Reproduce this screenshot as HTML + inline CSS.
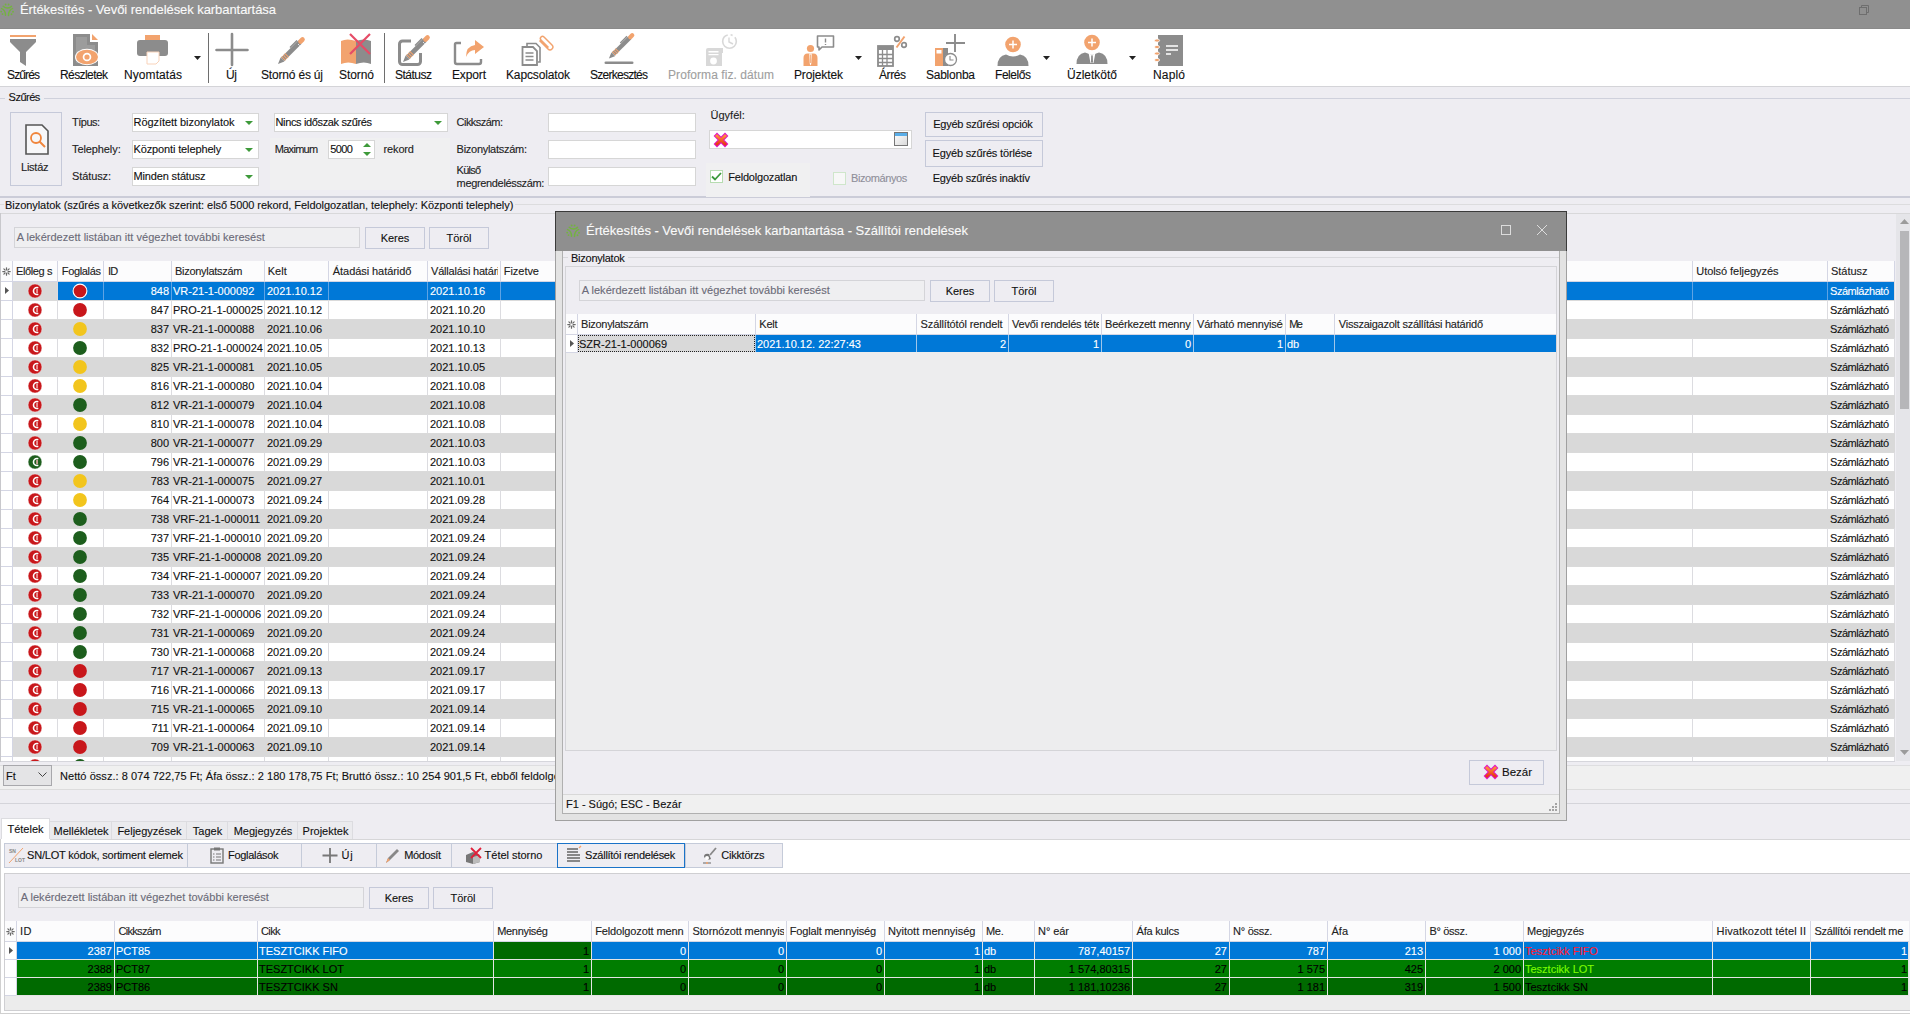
<!DOCTYPE html>
<html><head><meta charset="utf-8"><title>Értékesítés - Vevői rendelések karbantartása</title>
<style>
html,body{margin:0;padding:0;}
body{width:1910px;height:1014px;overflow:hidden;position:relative;background:#eeedf2;font-family:"Liberation Sans", sans-serif;font-size:11px;color:#000;-webkit-text-stroke:0.12px currentColor;}
svg{position:absolute;overflow:visible}
</style></head><body>
<div style="position:absolute;left:0px;top:0px;width:1910px;height:28px;background:#909090"></div><div style="position:absolute;left:0px;top:28px;width:1910px;height:1px;background:#8a8a8a"></div><svg style="left:0px;top:0px" width="15" height="17" viewBox="0 0 15 17"><g fill="none" stroke="#74b340" stroke-width="1.5" stroke-linecap="round"><path d="M3.2 6.3 Q7.2 9.8 11.5 6.3"/><path d="M1.6 8.6 Q5.5 10 5.5 15.3"/><path d="M12.5 8.6 Q8.5 10 8.5 15.5"/></g><g fill="#74b340"><circle cx="5.6" cy="4.5" r="0.95"/><circle cx="8.6" cy="4.5" r="0.95"/><circle cx="1.2" cy="11.6" r="0.95"/><circle cx="2.5" cy="14.1" r="0.95"/><circle cx="13" cy="11.8" r="0.95"/><circle cx="11.5" cy="14.3" r="0.95"/></g></svg><div style="position:absolute;top:1.80px;line-height:15px;font-size:13px;color:#fafafa;white-space:nowrap;left:20px;letter-spacing:-0.063px;">Értékesítés - Vevői rendelések karbantartása</div><svg style="left:1859px;top:5px" width="10" height="10" viewBox="0 0 10 10"><g fill="none" stroke="#6e6e6e" stroke-width="1"><rect x="0.5" y="2.5" width="7" height="7"/><path d="M2.5 2.5 V0.5 H9.5 V7.5 H7.5"/></g></svg><div style="position:absolute;left:0px;top:29px;width:1910px;height:57px;background:#fff"></div><div style="position:absolute;left:0px;top:86px;width:1910px;height:1px;background:#d4d4d8"></div><svg style="left:7px;top:34px" width="32" height="32" viewBox="0 0 32 32"><rect x="3" y="1" width="26" height="2" fill="#f2a36e"/><path d="M3 5 H29 V8 L19 18 V32 L13 28 V18 L3 8 Z" fill="#8c8c8c"/></svg><div style="position:absolute;top:67.84px;line-height:14px;font-size:12px;color:#111;white-space:nowrap;left:7px;letter-spacing:-0.872px;">Szűrés</div><svg style="left:70px;top:34px" width="32" height="32" viewBox="0 0 32 32"><path d="M3 0 H20 V8 H28 V32 H3 Z" fill="#8c8c8c"/><path d="M6 3 H17 V11 H25 V29 H6Z" fill="#9c9c9c"/><path d="M22 0 L28 6 H22 Z" fill="#f2a36e"/><ellipse cx="17" cy="23" rx="12" ry="8.3" fill="#fff"/><ellipse cx="17" cy="23" rx="11" ry="7.3" fill="#f2a36e"/><circle cx="17" cy="23" r="4.3" fill="#fff"/><circle cx="17" cy="23" r="2.6" fill="#f2a36e"/></svg><div style="position:absolute;top:67.84px;line-height:14px;font-size:12px;color:#111;white-space:nowrap;left:60px;letter-spacing:-0.586px;">Részletek</div><svg style="left:136px;top:34px" width="32" height="32" viewBox="0 0 32 32"><rect x="9" y="1" width="15" height="5" fill="#f2a36e"/><rect x="1" y="6" width="31" height="16" rx="3" fill="#8c8c8c"/><path d="M11 18 H23 V27 L20 30 H11 Z" fill="#fff" stroke="#f9d3ba" stroke-width="1"/></svg><div style="position:absolute;top:67.84px;line-height:14px;font-size:12px;color:#111;white-space:nowrap;left:124px;letter-spacing:0.080px;">Nyomtatás</div><svg style="left:216px;top:34px" width="32" height="32" viewBox="0 0 32 32"><path d="M16 0 V31 M0.5 16 H31.5" stroke="#8c8c8c" stroke-width="2.6" stroke-linecap="round"/></svg><div style="position:absolute;top:67.84px;line-height:14px;font-size:12px;color:#111;white-space:nowrap;left:226px;letter-spacing:-0.344px;">Új</div><svg style="left:276px;top:36px" width="32" height="32" viewBox="0 0 32 32"><g transform="translate(0,0)"><path d="M6.5 23.5 L24 6" stroke="#8c8c8c" stroke-width="4.6"/><path d="M2 28 L4.6 21.6 L8.4 25.4 Z" fill="#8c8c8c"/><path d="M5.6 20.6 L9.4 24.4 M7.2 19.0 L11.0 22.8 M8.8 17.4 L12.6 21.2" stroke="#f2a36e" stroke-width="1.1"/><path d="M24.5 5.5 L26.5 3.5" stroke="#f2a36e" stroke-width="4.6" stroke-linecap="round"/><path d="M22 8 L23.6 9.6" stroke="#fff" stroke-width="0.8"/><path d="M19 6.5 L14 11.5 M19 6.5 L21 4.5" stroke="#8c8c8c" stroke-width="1.4"/></g></svg><div style="position:absolute;top:67.84px;line-height:14px;font-size:12px;color:#111;white-space:nowrap;left:261px;letter-spacing:-0.186px;">Stornó és új</div><svg style="left:340px;top:33px" width="32" height="32" viewBox="0 0 32 32"><path d="M1 8 Q7 5 16 8 V31 Q8 28 1 31 Z" fill="#f2a36e"/><path d="M16 8 Q24 5 31 8 V31 Q24 28 16 31 Z" fill="#8c8c8c"/><path d="M10 1 L30 21 M30 1 L10 21" stroke="#e64c67" stroke-width="2.2"/></svg><div style="position:absolute;top:67.84px;line-height:14px;font-size:12px;color:#111;white-space:nowrap;left:339px;letter-spacing:-0.072px;">Stornó</div><svg style="left:397px;top:35px" width="32" height="32" viewBox="0 0 32 32"><rect x="2.5" y="6" width="21" height="23.5" rx="3" fill="none" stroke="#8c8c8c" stroke-width="3"/><rect x="14" y="2" width="14" height="16" fill="#fff"/><g transform="translate(4,-1)"><path d="M6.5 23.5 L24 6" stroke="#8c8c8c" stroke-width="4.6"/><path d="M2 28 L4.6 21.6 L8.4 25.4 Z" fill="#8c8c8c"/><path d="M5.6 20.6 L9.4 24.4 M7.2 19.0 L11.0 22.8 M8.8 17.4 L12.6 21.2" stroke="#f2a36e" stroke-width="1.1"/><path d="M24.5 5.5 L26.5 3.5" stroke="#f2a36e" stroke-width="4.6" stroke-linecap="round"/><path d="M22 8 L23.6 9.6" stroke="#fff" stroke-width="0.8"/><path d="M19 6.5 L14 11.5 M19 6.5 L21 4.5" stroke="#8c8c8c" stroke-width="1.4"/></g></svg><div style="position:absolute;top:67.84px;line-height:14px;font-size:12px;color:#111;white-space:nowrap;left:395px;letter-spacing:-0.505px;">Státusz</div><svg style="left:453px;top:36px" width="32" height="32" viewBox="0 0 32 32"><path d="M8 7 H3.5 Q2 7 2 8.5 V26 Q2 28 4 28 H26 Q28 28 28 26 V23" fill="none" stroke="#8c8c8c" stroke-width="2.4"/><path d="M13 21 Q13 10 22 9 V4 L31 11 L22 18 V14 Q16 14 13 21 Z" fill="#f2a36e"/></svg><div style="position:absolute;top:67.84px;line-height:14px;font-size:12px;color:#111;white-space:nowrap;left:452px;letter-spacing:-0.138px;">Export</div><svg style="left:521px;top:34px" width="32" height="32" viewBox="0 0 32 32"><path d="M6 12 V9.5 H15 L19 13.5 V28 H17" fill="none" stroke="#8c8c8c" stroke-width="1.6"/><path d="M1.5 13 H12 L16 17 V31 H1.5 Z" fill="#fff" stroke="#8c8c8c" stroke-width="1.8"/><path d="M4.5 19 H12.5 M4.5 22.5 H12.5 M4.5 26 H12.5" stroke="#8c8c8c" stroke-width="1.5"/><path d="M18.5 6.5 L27 15 Q29 17 31 15 Q33 13 31 11 L23 3 Q21.5 1.5 20 3 Q18.5 4.5 20 6 L27.5 13.5" fill="none" stroke="#f2a36e" stroke-width="1.5"/></svg><div style="position:absolute;top:67.84px;line-height:14px;font-size:12px;color:#111;white-space:nowrap;left:506px;letter-spacing:-0.138px;">Kapcsolatok</div><svg style="left:604px;top:34px" width="32" height="32" viewBox="0 0 32 32"><g transform="translate(3,-2) scale(0.95)"><path d="M6.5 23.5 L24 6" stroke="#8c8c8c" stroke-width="4.6"/><path d="M2 28 L4.6 21.6 L8.4 25.4 Z" fill="#8c8c8c"/><path d="M5.6 20.6 L9.4 24.4 M7.2 19.0 L11.0 22.8 M8.8 17.4 L12.6 21.2" stroke="#f2a36e" stroke-width="1.1"/><path d="M24.5 5.5 L26.5 3.5" stroke="#f2a36e" stroke-width="4.6" stroke-linecap="round"/><path d="M19 6.5 L14 11.5 M19 6.5 L21 4.5" stroke="#8c8c8c" stroke-width="1.4"/></g><rect x="0.5" y="27.5" width="29" height="2.6" rx="1.3" fill="#8c8c8c"/></svg><div style="position:absolute;top:67.84px;line-height:14px;font-size:12px;color:#111;white-space:nowrap;left:590px;letter-spacing:-0.736px;">Szerkesztés</div><svg style="left:705px;top:34px" width="32" height="32" viewBox="0 0 32 32"><g opacity="0.33"><path d="M1 16 Q1 14 3 14 H15 Q17 14 17 16 V32 H1Z" fill="#8c8c8c"/><rect x="15" y="14" width="3" height="5" fill="#8c8c8c"/><rect x="3.5" y="17" width="10" height="1.5" fill="#fff"/><rect x="3.5" y="20" width="10" height="1.2" fill="#fff"/><circle cx="8.5" cy="27" r="3.4" fill="#fff"/><circle cx="24.5" cy="7.5" r="6.8" fill="none" stroke="#8c8c8c" stroke-width="1.6" stroke-dasharray="30 3 2 3"/><path d="M24 3.5 V8 L28 10" stroke="#8c8c8c" stroke-width="1.4" fill="none"/></g></svg><div style="position:absolute;top:67.84px;line-height:14px;font-size:12px;color:#a0a0a0;white-space:nowrap;left:668px;letter-spacing:0.072px;">Proforma fiz. dátum</div><svg style="left:803px;top:35px" width="32" height="32" viewBox="0 0 32 32"><circle cx="7.5" cy="13.5" r="3.6" fill="#f2a36e"/><path d="M0.5 31 V23 Q0.5 18.5 4.5 18.5 H10.5 Q14.5 18.5 14.5 23 V31Z" fill="#f2a36e"/><path d="M6.3 18.5 H8.7 L8.2 29 L7.5 30.5 L6.8 29Z" fill="#fff"/><path d="M7.1 19.5 H7.9 V28 H7.1Z" fill="#f2a36e"/><path d="M14.5 1 H30.5 V12 H19 L16 15 V12 H14.5Z" fill="none" stroke="#8c8c8c" stroke-width="1.6" stroke-linejoin="round"/><path d="M22.5 3.5 V7.5 M22.5 9 V10" stroke="#8c8c8c" stroke-width="1.4"/></svg><div style="position:absolute;top:67.84px;line-height:14px;font-size:12px;color:#111;white-space:nowrap;left:794px;letter-spacing:-0.129px;">Projektek</div><svg style="left:876px;top:35px" width="32" height="32" viewBox="0 0 32 32"><rect x="2" y="11" width="15" height="20" fill="none" stroke="#8c8c8c" stroke-width="1.8"/><rect x="2" y="11" width="15" height="4" fill="#8c8c8c"/><path d="M2 19.5 H17 M2 23.5 H17 M2 27.5 H17 M6.5 15 V31 M11 15 V31" stroke="#8c8c8c" stroke-width="1.3"/><circle cx="21" cy="4" r="2.3" fill="none" stroke="#8c8c8c" stroke-width="1.7"/><circle cx="28" cy="10" r="2.3" fill="none" stroke="#8c8c8c" stroke-width="1.7"/><path d="M28.5 1.5 L20.5 12.5" stroke="#f2a36e" stroke-width="2"/></svg><div style="position:absolute;top:67.84px;line-height:14px;font-size:12px;color:#111;white-space:nowrap;left:879px;letter-spacing:-0.418px;">Árrés</div><svg style="left:934px;top:34px" width="32" height="32" viewBox="0 0 32 32"><rect x="1" y="14" width="8" height="18" fill="#f2a36e"/><rect x="2.5" y="16" width="5" height="3.5" fill="#fff"/><rect x="9" y="14" width="5" height="18" fill="#8c8c8c"/><circle cx="16.5" cy="25.5" r="6" fill="#fff" stroke="#8c8c8c" stroke-width="1.3"/><path d="M16 22 V26 H19.5" stroke="#8c8c8c" stroke-width="1.1" fill="none"/><path d="M21 0 V18 M12 9 H31" stroke="#8c8c8c" stroke-width="1.9"/></svg><div style="position:absolute;top:67.84px;line-height:14px;font-size:12px;color:#111;white-space:nowrap;left:926px;letter-spacing:-0.246px;">Sablonba</div><svg style="left:997px;top:36px" width="32" height="32" viewBox="0 0 32 32"><circle cx="16" cy="8.5" r="7.8" fill="#f2a36e"/><path d="M16 4.5 V12.5 M12 8.5 H20" stroke="#fff" stroke-width="1.5"/><path d="M0.5 30 Q0.5 20 9 18.5 Q16 22.5 23 18.5 Q31.5 20 31.5 30 Z" fill="#8c8c8c"/></svg><div style="position:absolute;top:67.84px;line-height:14px;font-size:12px;color:#111;white-space:nowrap;left:995px;letter-spacing:-0.448px;">Felelős</div><svg style="left:1076px;top:34px" width="32" height="32" viewBox="0 0 32 32"><circle cx="16" cy="8.5" r="7.8" fill="#f2a36e"/><path d="M16 4.5 V12.5 M12 8.5 H20" stroke="#fff" stroke-width="1.5"/><path d="M0.5 30 Q0.5 20 9 18.5 L16 21 L23 18.5 Q31.5 20 31.5 30 Z" fill="#8c8c8c"/><path d="M12.5 18.5 L16 21.5 L19.5 18.5 L17.5 29 H14.5 Z" fill="#fff"/><path d="M15.2 21.5 H16.8 L17 28 L16 29.5 L15 28Z" fill="#8c8c8c"/></svg><div style="position:absolute;top:67.84px;line-height:14px;font-size:12px;color:#111;white-space:nowrap;left:1067px;letter-spacing:-0.004px;">Üzletkötő</div><svg style="left:1154px;top:35px" width="32" height="32" viewBox="0 0 32 32"><rect x="4" y="0" width="25" height="31" fill="#8c8c8c"/><g fill="#f2a36e" stroke="#fff" stroke-width="0.8"><ellipse cx="3" cy="5.5" rx="2.6" ry="1.6"/><ellipse cx="3" cy="12" rx="2.6" ry="1.6"/><ellipse cx="3" cy="18.5" rx="2.6" ry="1.6"/><ellipse cx="3" cy="25" rx="2.6" ry="1.6"/></g><path d="M12 11 H24 M12 15 H24 M12 19 H17" stroke="#fff" stroke-width="1.6"/></svg><div style="position:absolute;top:67.84px;line-height:14px;font-size:12px;color:#111;white-space:nowrap;left:1153px;letter-spacing:0.160px;">Napló</div><svg style="left:194px;top:56px" width="7" height="4" viewBox="0 0 7 4"><path d="M0 0 H7 L3.5 4 Z" fill="#222"/></svg><svg style="left:855px;top:56px" width="7" height="4" viewBox="0 0 7 4"><path d="M0 0 H7 L3.5 4 Z" fill="#222"/></svg><svg style="left:1043px;top:56px" width="7" height="4" viewBox="0 0 7 4"><path d="M0 0 H7 L3.5 4 Z" fill="#222"/></svg><svg style="left:1129px;top:56px" width="7" height="4" viewBox="0 0 7 4"><path d="M0 0 H7 L3.5 4 Z" fill="#222"/></svg><div style="position:absolute;left:208px;top:33px;width:1px;height:50px;background:#6e6e6e"></div><div style="position:absolute;left:384px;top:33px;width:1px;height:50px;background:#6e6e6e"></div><div style="position:absolute;left:0px;top:98px;width:5px;height:1px;background:#cfd1dc"></div><div style="position:absolute;left:44px;top:98px;width:1866px;height:1px;background:#cfd1dc"></div><div style="position:absolute;top:91.39px;line-height:13px;font-size:11px;color:#111;white-space:nowrap;left:8.6px;letter-spacing:-0.510px;">Szűrés</div><div style="position:absolute;left:0px;top:196px;width:1910px;height:2px;background:#cbccd8"></div><div style="position:absolute;left:10px;top:112px;width:50px;height:72px;border:1px solid #c5c9d9;background:#eeedf2"></div><svg style="left:25px;top:124px" width="24" height="32" viewBox="0 0 24 32"><path d="M1 1 H17 L23 7 V30 H1 Z" fill="#f7f7f9" stroke="#555" stroke-width="1.6"/><circle cx="11" cy="14" r="5" fill="none" stroke="#f0853c" stroke-width="1.8"/><path d="M14.5 17.5 L20 23" stroke="#f0853c" stroke-width="2"/></svg><div style="position:absolute;top:160.69px;line-height:13px;font-size:11px;color:#222;white-space:nowrap;left:21px;letter-spacing:-0.230px;">Listáz</div><div style="position:absolute;top:116.49px;line-height:13px;font-size:11px;color:#222;white-space:nowrap;left:72px;letter-spacing:-0.496px;">Típus:</div><div style="position:absolute;top:143.29px;line-height:13px;font-size:11px;color:#222;white-space:nowrap;left:72px;letter-spacing:-0.094px;">Telephely:</div><div style="position:absolute;top:170.19px;line-height:13px;font-size:11px;color:#222;white-space:nowrap;left:72px;letter-spacing:-0.107px;">Státusz:</div><div style="position:absolute;left:132px;top:113px;width:127px;height:19px;background:#fff;border:1px solid #d6d6d6;box-sizing:border-box"></div><div style="position:absolute;top:115.69px;line-height:13px;font-size:11px;color:#111;white-space:nowrap;left:133.5px;letter-spacing:-0.056px;">Rögzített bizonylatok</div><svg style="left:245px;top:121px" width="8" height="4" viewBox="0 0 8 4"><path d="M0 0 H8 L4 4Z" fill="#3e9a3a"/></svg><div style="position:absolute;left:132px;top:140px;width:127px;height:19px;background:#fff;border:1px solid #d6d6d6;box-sizing:border-box"></div><div style="position:absolute;top:142.69px;line-height:13px;font-size:11px;color:#111;white-space:nowrap;left:133.5px;letter-spacing:-0.130px;">Központi telephely</div><svg style="left:245px;top:148px" width="8" height="4" viewBox="0 0 8 4"><path d="M0 0 H8 L4 4Z" fill="#3e9a3a"/></svg><div style="position:absolute;left:132px;top:167px;width:127px;height:19px;background:#fff;border:1px solid #d6d6d6;box-sizing:border-box"></div><div style="position:absolute;top:169.69px;line-height:13px;font-size:11px;color:#111;white-space:nowrap;left:133.5px;letter-spacing:-0.145px;">Minden státusz</div><svg style="left:245px;top:175px" width="8" height="4" viewBox="0 0 8 4"><path d="M0 0 H8 L4 4Z" fill="#3e9a3a"/></svg><div style="position:absolute;left:274px;top:113px;width:174px;height:19px;background:#fff;border:1px solid #d6d6d6;box-sizing:border-box"></div><div style="position:absolute;top:115.69px;line-height:13px;font-size:11px;color:#111;white-space:nowrap;left:275.5px;letter-spacing:-0.359px;">Nincs időszak szűrés</div><svg style="left:434px;top:121px" width="8" height="4" viewBox="0 0 8 4"><path d="M0 0 H8 L4 4Z" fill="#3e9a3a"/></svg><div style="position:absolute;left:270px;top:138px;width:180px;height:52px;background:#f0f0f1"></div><div style="position:absolute;top:143.29px;line-height:13px;font-size:11px;color:#222;white-space:nowrap;left:274.7px;letter-spacing:-0.695px;">Maximum</div><div style="position:absolute;left:328px;top:140px;width:47px;height:19px;background:#fff;border:1px solid #d6d6d6;box-sizing:border-box"></div><div style="position:absolute;top:143.29px;line-height:13px;font-size:11px;color:#111;white-space:nowrap;left:330.3px;letter-spacing:-0.661px;">5000</div><svg style="left:363px;top:143px" width="8" height="13" viewBox="0 0 8 13"><path d="M0 4 L4 0 L8 4Z M0 9 H8 L4 13Z" fill="#3e9a3a"/></svg><div style="position:absolute;top:143.29px;line-height:13px;font-size:11px;color:#222;white-space:nowrap;left:383.6px;letter-spacing:-0.158px;">rekord</div><div style="position:absolute;top:115.89px;line-height:13px;font-size:11px;color:#222;white-space:nowrap;left:456.6px;letter-spacing:-0.542px;">Cikkszám:</div><div style="position:absolute;top:142.69px;line-height:13px;font-size:11px;color:#222;white-space:nowrap;left:456.6px;letter-spacing:-0.276px;">Bizonylatszám:</div><div style="position:absolute;top:163.99px;line-height:13px;font-size:11px;color:#222;white-space:nowrap;left:456.6px;letter-spacing:-0.758px;">Külső</div><div style="position:absolute;top:176.79px;line-height:13px;font-size:11px;color:#222;white-space:nowrap;left:456.6px;letter-spacing:-0.343px;">megrendelésszám:</div><div style="position:absolute;left:548px;top:113px;width:148px;height:19px;background:#fff;border:1px solid #d6d6d6;box-sizing:border-box"></div><div style="position:absolute;left:548px;top:140px;width:148px;height:19px;background:#fff;border:1px solid #d6d6d6;box-sizing:border-box"></div><div style="position:absolute;left:548px;top:167px;width:148px;height:19px;background:#fff;border:1px solid #d6d6d6;box-sizing:border-box"></div><div style="position:absolute;top:109.09px;line-height:13px;font-size:11px;color:#222;white-space:nowrap;left:710.4px;letter-spacing:0.042px;">Ügyfél:</div><div style="position:absolute;left:709px;top:130px;width:203px;height:19px;background:#fff;border:1px solid #d6d6d6;box-sizing:border-box"></div><svg style="left:713.5px;top:132.5px" width="14" height="14" viewBox="0 0 14 14"><defs><linearGradient id="rxg" x1="0" y1="0" x2="0" y2="1"><stop offset="0" stop-color="#ff8a3a"/><stop offset="1" stop-color="#e83a14"/></linearGradient></defs><path d="M3 3 L11 11 M11 3 L3 11" stroke="#e010c8" stroke-width="4.8" stroke-linecap="square"/><path d="M3 3 L11 11 M11 3 L3 11" stroke="url(#rxg)" stroke-width="3.0" stroke-linecap="square"/></svg><svg style="left:894px;top:132px" width="14" height="14" viewBox="0 0 14 14"><defs><linearGradient id="wg" x1="0" y1="0" x2="1" y2="1"><stop offset="0" stop-color="#fff"/><stop offset="1" stop-color="#d8d8d8"/></linearGradient></defs><rect x="0.5" y="0.5" width="13" height="13" fill="url(#wg)" stroke="#777"/><rect x="1" y="1" width="12" height="3" fill="#5aaee8"/></svg><div style="position:absolute;left:706px;top:163px;width:104px;height:34px;background:#f0f0f1"></div><div style="position:absolute;left:710px;top:170px;width:13px;height:13px;background:#fff;border:1px solid #b6dcb0;box-sizing:border-box"></div><svg style="left:711px;top:172px" width="11" height="9" viewBox="0 0 11 9"><path d="M1 4.5 L4 7.5 L10 1" fill="none" stroke="#3c9a3c" stroke-width="1.8"/></svg><div style="position:absolute;top:171.29px;line-height:13px;font-size:11px;color:#111;white-space:nowrap;left:728.2px;letter-spacing:-0.189px;">Feldolgozatlan</div><div style="position:absolute;left:833px;top:172px;width:13px;height:13px;background:#f7f7f7;border:1px solid #cfe6cb;box-sizing:border-box"></div><div style="position:absolute;top:171.69px;line-height:13px;font-size:11px;color:#8f8f9a;white-space:nowrap;left:851px;letter-spacing:-0.402px;">Bizományos</div><div style="position:absolute;left:925px;top:112px;width:118px;height:25px;border:1px solid #c5c9d9;box-sizing:border-box;background:#eeedf2;"></div><div style="position:absolute;top:117.29px;line-height:13px;font-size:11px;color:#111;white-space:nowrap;left:784.0px;width:400px;text-align:center;"></div><div style="position:absolute;top:118.29px;line-height:13px;font-size:11px;color:#111;white-space:nowrap;left:933.2px;letter-spacing:-0.229px;">Egyéb szűrési opciók</div><div style="position:absolute;left:925px;top:140px;width:118px;height:27px;border:1px solid #c5c9d9;box-sizing:border-box;background:#eeedf2;"></div><div style="position:absolute;top:146.39px;line-height:13px;font-size:11px;color:#111;white-space:nowrap;left:784.0px;width:400px;text-align:center;"></div><div style="position:absolute;top:147.39px;line-height:13px;font-size:11px;color:#111;white-space:nowrap;left:932.5px;letter-spacing:-0.164px;">Egyéb szűrés törlése</div><div style="position:absolute;top:172.49px;line-height:13px;font-size:11px;color:#111;white-space:nowrap;left:932.7px;letter-spacing:-0.216px;">Egyéb szűrés inaktív</div><div style="position:absolute;left:0px;top:204px;width:4px;height:1px;background:#dcdcde"></div><div style="position:absolute;left:515px;top:204px;width:1395px;height:1px;background:#dcdcde"></div><div style="position:absolute;top:198.69px;line-height:13px;font-size:11px;color:#111;white-space:nowrap;left:5px;letter-spacing:-0.05px">Bizonylatok (szűrés a következők szerint: első 5000 rekord, Feldolgozatlan, telephely: Központi telephely)</div><div style="position:absolute;left:1px;top:213px;width:1909px;height:1px;background:#d8d8da"></div><div style="position:absolute;left:14px;top:227px;width:346px;height:21px;background:#efeff1;border:1px solid #d4d4d8;box-sizing:border-box"></div><div style="position:absolute;top:230.89px;line-height:13px;font-size:11px;color:#6b6b78;white-space:nowrap;left:16.7px;letter-spacing:0.021px;">A lekérdezett listában itt végezhet további keresést</div><div style="position:absolute;left:365px;top:227px;width:60px;height:22px;border:1px solid #c5c9d9;box-sizing:border-box;background:#eeedf2;"></div><div style="position:absolute;top:231.99px;line-height:13px;font-size:11px;color:#111;white-space:nowrap;left:195.0px;width:400px;text-align:center;">Keres</div><div style="position:absolute;left:429px;top:227px;width:60px;height:22px;border:1px solid #c5c9d9;box-sizing:border-box;background:#eeedf2;"></div><div style="position:absolute;top:231.99px;line-height:13px;font-size:11px;color:#111;white-space:nowrap;left:259.0px;width:400px;text-align:center;">Töröl</div><div style="position:absolute;left:1px;top:261px;width:1894px;height:20px;background:#fcfcfd"></div><div style="position:absolute;left:12px;top:261px;width:1px;height:20px;background:#d4d6e4"></div><div style="position:absolute;left:13px;top:261px;width:42px;height:20px;overflow:hidden;white-space:nowrap"><div style="position:absolute;left:3.00px;top:3.69px;line-height:13px;font-size:11px;color:#222;letter-spacing:-0.392px">Előleg s</div></div><div style="position:absolute;left:57px;top:261px;width:1px;height:20px;background:#d4d6e4"></div><div style="position:absolute;left:58px;top:261px;width:43px;height:20px;overflow:hidden;white-space:nowrap"><div style="position:absolute;left:3.80px;top:3.69px;line-height:13px;font-size:11px;color:#222;letter-spacing:-0.340px">Foglalás</div></div><div style="position:absolute;left:103px;top:261px;width:1px;height:20px;background:#d4d6e4"></div><div style="position:absolute;left:104px;top:261px;width:65px;height:20px;overflow:hidden;white-space:nowrap"><div style="position:absolute;left:3.90px;top:3.69px;line-height:13px;font-size:11px;color:#222;letter-spacing:-0.600px">ID</div></div><div style="position:absolute;left:171px;top:261px;width:1px;height:20px;background:#d4d6e4"></div><div style="position:absolute;left:172px;top:261px;width:90px;height:20px;overflow:hidden;white-space:nowrap"><div style="position:absolute;left:3.00px;top:3.69px;line-height:13px;font-size:11px;color:#222;letter-spacing:-0.285px">Bizonylatszám</div></div><div style="position:absolute;left:264px;top:261px;width:1px;height:20px;background:#d4d6e4"></div><div style="position:absolute;left:265px;top:261px;width:61px;height:20px;overflow:hidden;white-space:nowrap"><div style="position:absolute;left:2.70px;top:3.69px;line-height:13px;font-size:11px;color:#222;letter-spacing:0.044px">Kelt</div></div><div style="position:absolute;left:328px;top:261px;width:1px;height:20px;background:#d4d6e4"></div><div style="position:absolute;left:329px;top:261px;width:96px;height:20px;overflow:hidden;white-space:nowrap"><div style="position:absolute;left:3.80px;top:3.69px;line-height:13px;font-size:11px;color:#222;letter-spacing:-0.060px">Átadási határidő</div></div><div style="position:absolute;left:427px;top:261px;width:1px;height:20px;background:#d4d6e4"></div><div style="position:absolute;left:428px;top:261px;width:70px;height:20px;overflow:hidden;white-space:nowrap"><div style="position:absolute;left:3.00px;top:3.69px;line-height:13px;font-size:11px;color:#222;letter-spacing:-0.200px">Vállalási határidő</div></div><div style="position:absolute;left:500px;top:261px;width:1px;height:20px;background:#d4d6e4"></div><div style="position:absolute;left:501px;top:261px;width:1189px;height:20px;overflow:hidden;white-space:nowrap"><div style="position:absolute;left:2.80px;top:3.69px;line-height:13px;font-size:11px;color:#222;letter-spacing:-0.045px">Fizetve</div></div><div style="position:absolute;left:1692px;top:261px;width:1px;height:20px;background:#d4d6e4"></div><div style="position:absolute;left:1693px;top:261px;width:132px;height:20px;overflow:hidden;white-space:nowrap"><div style="position:absolute;left:3.30px;top:3.69px;line-height:13px;font-size:11px;color:#222;letter-spacing:-0.060px">Utolsó feljegyzés</div></div><div style="position:absolute;left:1827px;top:261px;width:1px;height:20px;background:#d4d6e4"></div><div style="position:absolute;left:1828px;top:261px;width:65px;height:20px;overflow:hidden;white-space:nowrap"><div style="position:absolute;left:2.90px;top:3.69px;line-height:13px;font-size:11px;color:#222;letter-spacing:0.002px">Státusz</div></div><div style="position:absolute;left:1894px;top:261px;width:1px;height:20px;background:#d4d6e4"></div><svg style="left:2px;top:267px" width="9" height="9" viewBox="0 0 9 9"><g stroke="#6a6a6a" stroke-width="1.25" stroke-linecap="round"><path d="M4.5 0.8 V2.9 M4.5 6.1 V8.2 M0.8 4.5 H2.9 M6.1 4.5 H8.2 M1.9 1.9 L3.1 3.1 M5.9 5.9 L7.1 7.1 M7.1 1.9 L5.9 3.1 M3.1 5.9 L1.9 7.1"/></g></svg><div style="position:absolute;left:0;top:281px;width:1910px;height:19px;overflow:hidden;"><div style="position:absolute;left:13px;top:0;width:1882px;height:19px;background:#0078d7"></div><div style="position:absolute;left:13px;top:0;width:44px;height:19px;background:#d9d9d9"></div><div style="position:absolute;left:57px;top:0;width:1px;height:19px;background:#dcdce0"></div><div style="position:absolute;left:103px;top:0;width:1px;height:19px;background:#5ea3e4"></div><div style="position:absolute;left:171px;top:0;width:1px;height:19px;background:#5ea3e4"></div><div style="position:absolute;left:264px;top:0;width:1px;height:19px;background:#5ea3e4"></div><div style="position:absolute;left:328px;top:0;width:1px;height:19px;background:#5ea3e4"></div><div style="position:absolute;left:427px;top:0;width:1px;height:19px;background:#5ea3e4"></div><div style="position:absolute;left:500px;top:0;width:1px;height:19px;background:#5ea3e4"></div><div style="position:absolute;left:1692px;top:0;width:1px;height:19px;background:#5ea3e4"></div><div style="position:absolute;left:1827px;top:0;width:1px;height:19px;background:#5ea3e4"></div><div style="position:absolute;left:1894px;top:0;width:1px;height:19px;background:#dcdce0"></div><div style="position:absolute;right:1741px;top:3.69px;line-height:13px;font-size:11px;color:#fff;white-space:nowrap">848</div><div style="position:absolute;left:173px;top:3.69px;line-height:13px;font-size:11px;color:#fff;white-space:nowrap">VR-21-1-000092</div><div style="position:absolute;left:267px;top:3.69px;line-height:13px;font-size:11px;color:#fff;white-space:nowrap">2021.10.12</div><div style="position:absolute;left:430px;top:3.69px;line-height:13px;font-size:11px;color:#fff;white-space:nowrap">2021.10.16</div><div style="position:absolute;left:1830px;top:3.69px;line-height:13px;font-size:11px;color:#fff;white-space:nowrap;letter-spacing:-0.45px">Számlázható</div><svg style="left:27px;top:2px" width="16" height="16" viewBox="0 0 16 16"><circle cx="8" cy="8" r="6.9" fill="#c8171b" stroke="#fff" stroke-width="0.6" stroke-opacity="0.6"/><path d="M11.3 4.7 Q10.6 4.5 10 4.5 A3.5 3.5 0 0 0 10 11.5 Q10.6 11.5 11.3 11.3" fill="none" stroke="#fff" stroke-width="1.6"/><rect x="9.3" y="5.9" width="1.5" height="4.2" fill="#f2b2b2"/></svg><svg style="left:72px;top:2px" width="16" height="16" viewBox="0 0 16 16"><circle cx="8" cy="8" r="6.9" fill="#c8171b" stroke="#fff" stroke-width="1.1"/></svg></div><div style="position:absolute;left:1px;top:281px;width:12px;height:1px;background:#d4d6e4"></div><div style="position:absolute;left:0;top:300px;width:1910px;height:19px;overflow:hidden;"><div style="position:absolute;left:13px;top:0;width:1882px;height:19px;background:#fff"></div><div style="position:absolute;left:13px;top:0;width:1882px;height:1px;background:#dadada"></div><div style="position:absolute;left:57px;top:0;width:1px;height:19px;background:#dcdce0"></div><div style="position:absolute;left:103px;top:0;width:1px;height:19px;background:#dcdce0"></div><div style="position:absolute;left:171px;top:0;width:1px;height:19px;background:#dcdce0"></div><div style="position:absolute;left:264px;top:0;width:1px;height:19px;background:#dcdce0"></div><div style="position:absolute;left:328px;top:0;width:1px;height:19px;background:#dcdce0"></div><div style="position:absolute;left:427px;top:0;width:1px;height:19px;background:#dcdce0"></div><div style="position:absolute;left:500px;top:0;width:1px;height:19px;background:#dcdce0"></div><div style="position:absolute;left:1692px;top:0;width:1px;height:19px;background:#dcdce0"></div><div style="position:absolute;left:1827px;top:0;width:1px;height:19px;background:#dcdce0"></div><div style="position:absolute;left:1894px;top:0;width:1px;height:19px;background:#dcdce0"></div><div style="position:absolute;right:1741px;top:3.69px;line-height:13px;font-size:11px;color:#111;white-space:nowrap">847</div><div style="position:absolute;left:173px;top:3.69px;line-height:13px;font-size:11px;color:#111;white-space:nowrap">PRO-21-1-000025</div><div style="position:absolute;left:267px;top:3.69px;line-height:13px;font-size:11px;color:#111;white-space:nowrap">2021.10.12</div><div style="position:absolute;left:430px;top:3.69px;line-height:13px;font-size:11px;color:#111;white-space:nowrap">2021.10.20</div><div style="position:absolute;left:1830px;top:3.69px;line-height:13px;font-size:11px;color:#111;white-space:nowrap;letter-spacing:-0.45px">Számlázható</div><svg style="left:27px;top:2px" width="16" height="16" viewBox="0 0 16 16"><circle cx="8" cy="8" r="6.9" fill="#c8171b" stroke="#fff" stroke-width="0.6" stroke-opacity="0.6"/><path d="M11.3 4.7 Q10.6 4.5 10 4.5 A3.5 3.5 0 0 0 10 11.5 Q10.6 11.5 11.3 11.3" fill="none" stroke="#fff" stroke-width="1.6"/><rect x="9.3" y="5.9" width="1.5" height="4.2" fill="#f2b2b2"/></svg><svg style="left:72px;top:2px" width="16" height="16" viewBox="0 0 16 16"><circle cx="8" cy="8" r="6.9" fill="#c8171b" /></svg></div><div style="position:absolute;left:1px;top:300px;width:12px;height:1px;background:#d4d6e4"></div><div style="position:absolute;left:0;top:319px;width:1910px;height:19px;overflow:hidden;"><div style="position:absolute;left:13px;top:0;width:1882px;height:19px;background:#d9d9d9"></div><div style="position:absolute;left:13px;top:0;width:1882px;height:1px;background:#dadada"></div><div style="position:absolute;right:1741px;top:3.69px;line-height:13px;font-size:11px;color:#111;white-space:nowrap">837</div><div style="position:absolute;left:173px;top:3.69px;line-height:13px;font-size:11px;color:#111;white-space:nowrap">VR-21-1-000088</div><div style="position:absolute;left:267px;top:3.69px;line-height:13px;font-size:11px;color:#111;white-space:nowrap">2021.10.06</div><div style="position:absolute;left:430px;top:3.69px;line-height:13px;font-size:11px;color:#111;white-space:nowrap">2021.10.10</div><div style="position:absolute;left:1830px;top:3.69px;line-height:13px;font-size:11px;color:#111;white-space:nowrap;letter-spacing:-0.45px">Számlázható</div><svg style="left:27px;top:2px" width="16" height="16" viewBox="0 0 16 16"><circle cx="8" cy="8" r="6.9" fill="#c8171b" stroke="#fff" stroke-width="0.6" stroke-opacity="0.6"/><path d="M11.3 4.7 Q10.6 4.5 10 4.5 A3.5 3.5 0 0 0 10 11.5 Q10.6 11.5 11.3 11.3" fill="none" stroke="#fff" stroke-width="1.6"/><rect x="9.3" y="5.9" width="1.5" height="4.2" fill="#f2b2b2"/></svg><svg style="left:72px;top:2px" width="16" height="16" viewBox="0 0 16 16"><circle cx="8" cy="8" r="6.9" fill="#f2c51d" /></svg></div><div style="position:absolute;left:1px;top:319px;width:12px;height:1px;background:#d4d6e4"></div><div style="position:absolute;left:0;top:338px;width:1910px;height:19px;overflow:hidden;"><div style="position:absolute;left:13px;top:0;width:1882px;height:19px;background:#fff"></div><div style="position:absolute;left:13px;top:0;width:1882px;height:1px;background:#dadada"></div><div style="position:absolute;left:57px;top:0;width:1px;height:19px;background:#dcdce0"></div><div style="position:absolute;left:103px;top:0;width:1px;height:19px;background:#dcdce0"></div><div style="position:absolute;left:171px;top:0;width:1px;height:19px;background:#dcdce0"></div><div style="position:absolute;left:264px;top:0;width:1px;height:19px;background:#dcdce0"></div><div style="position:absolute;left:328px;top:0;width:1px;height:19px;background:#dcdce0"></div><div style="position:absolute;left:427px;top:0;width:1px;height:19px;background:#dcdce0"></div><div style="position:absolute;left:500px;top:0;width:1px;height:19px;background:#dcdce0"></div><div style="position:absolute;left:1692px;top:0;width:1px;height:19px;background:#dcdce0"></div><div style="position:absolute;left:1827px;top:0;width:1px;height:19px;background:#dcdce0"></div><div style="position:absolute;left:1894px;top:0;width:1px;height:19px;background:#dcdce0"></div><div style="position:absolute;right:1741px;top:3.69px;line-height:13px;font-size:11px;color:#111;white-space:nowrap">832</div><div style="position:absolute;left:173px;top:3.69px;line-height:13px;font-size:11px;color:#111;white-space:nowrap">PRO-21-1-000024</div><div style="position:absolute;left:267px;top:3.69px;line-height:13px;font-size:11px;color:#111;white-space:nowrap">2021.10.05</div><div style="position:absolute;left:430px;top:3.69px;line-height:13px;font-size:11px;color:#111;white-space:nowrap">2021.10.13</div><div style="position:absolute;left:1830px;top:3.69px;line-height:13px;font-size:11px;color:#111;white-space:nowrap;letter-spacing:-0.45px">Számlázható</div><svg style="left:27px;top:2px" width="16" height="16" viewBox="0 0 16 16"><circle cx="8" cy="8" r="6.9" fill="#c8171b" stroke="#fff" stroke-width="0.6" stroke-opacity="0.6"/><path d="M11.3 4.7 Q10.6 4.5 10 4.5 A3.5 3.5 0 0 0 10 11.5 Q10.6 11.5 11.3 11.3" fill="none" stroke="#fff" stroke-width="1.6"/><rect x="9.3" y="5.9" width="1.5" height="4.2" fill="#f2b2b2"/></svg><svg style="left:72px;top:2px" width="16" height="16" viewBox="0 0 16 16"><circle cx="8" cy="8" r="6.9" fill="#1d5e1d" /></svg></div><div style="position:absolute;left:1px;top:338px;width:12px;height:1px;background:#d4d6e4"></div><div style="position:absolute;left:0;top:357px;width:1910px;height:19px;overflow:hidden;"><div style="position:absolute;left:13px;top:0;width:1882px;height:19px;background:#d9d9d9"></div><div style="position:absolute;left:13px;top:0;width:1882px;height:1px;background:#dadada"></div><div style="position:absolute;right:1741px;top:3.69px;line-height:13px;font-size:11px;color:#111;white-space:nowrap">825</div><div style="position:absolute;left:173px;top:3.69px;line-height:13px;font-size:11px;color:#111;white-space:nowrap">VR-21-1-000081</div><div style="position:absolute;left:267px;top:3.69px;line-height:13px;font-size:11px;color:#111;white-space:nowrap">2021.10.05</div><div style="position:absolute;left:430px;top:3.69px;line-height:13px;font-size:11px;color:#111;white-space:nowrap">2021.10.05</div><div style="position:absolute;left:1830px;top:3.69px;line-height:13px;font-size:11px;color:#111;white-space:nowrap;letter-spacing:-0.45px">Számlázható</div><svg style="left:27px;top:2px" width="16" height="16" viewBox="0 0 16 16"><circle cx="8" cy="8" r="6.9" fill="#c8171b" stroke="#fff" stroke-width="0.6" stroke-opacity="0.6"/><path d="M11.3 4.7 Q10.6 4.5 10 4.5 A3.5 3.5 0 0 0 10 11.5 Q10.6 11.5 11.3 11.3" fill="none" stroke="#fff" stroke-width="1.6"/><rect x="9.3" y="5.9" width="1.5" height="4.2" fill="#f2b2b2"/></svg><svg style="left:72px;top:2px" width="16" height="16" viewBox="0 0 16 16"><circle cx="8" cy="8" r="6.9" fill="#f2c51d" /></svg></div><div style="position:absolute;left:1px;top:357px;width:12px;height:1px;background:#d4d6e4"></div><div style="position:absolute;left:0;top:376px;width:1910px;height:19px;overflow:hidden;"><div style="position:absolute;left:13px;top:0;width:1882px;height:19px;background:#fff"></div><div style="position:absolute;left:13px;top:0;width:1882px;height:1px;background:#dadada"></div><div style="position:absolute;left:57px;top:0;width:1px;height:19px;background:#dcdce0"></div><div style="position:absolute;left:103px;top:0;width:1px;height:19px;background:#dcdce0"></div><div style="position:absolute;left:171px;top:0;width:1px;height:19px;background:#dcdce0"></div><div style="position:absolute;left:264px;top:0;width:1px;height:19px;background:#dcdce0"></div><div style="position:absolute;left:328px;top:0;width:1px;height:19px;background:#dcdce0"></div><div style="position:absolute;left:427px;top:0;width:1px;height:19px;background:#dcdce0"></div><div style="position:absolute;left:500px;top:0;width:1px;height:19px;background:#dcdce0"></div><div style="position:absolute;left:1692px;top:0;width:1px;height:19px;background:#dcdce0"></div><div style="position:absolute;left:1827px;top:0;width:1px;height:19px;background:#dcdce0"></div><div style="position:absolute;left:1894px;top:0;width:1px;height:19px;background:#dcdce0"></div><div style="position:absolute;right:1741px;top:3.69px;line-height:13px;font-size:11px;color:#111;white-space:nowrap">816</div><div style="position:absolute;left:173px;top:3.69px;line-height:13px;font-size:11px;color:#111;white-space:nowrap">VR-21-1-000080</div><div style="position:absolute;left:267px;top:3.69px;line-height:13px;font-size:11px;color:#111;white-space:nowrap">2021.10.04</div><div style="position:absolute;left:430px;top:3.69px;line-height:13px;font-size:11px;color:#111;white-space:nowrap">2021.10.08</div><div style="position:absolute;left:1830px;top:3.69px;line-height:13px;font-size:11px;color:#111;white-space:nowrap;letter-spacing:-0.45px">Számlázható</div><svg style="left:27px;top:2px" width="16" height="16" viewBox="0 0 16 16"><circle cx="8" cy="8" r="6.9" fill="#c8171b" stroke="#fff" stroke-width="0.6" stroke-opacity="0.6"/><path d="M11.3 4.7 Q10.6 4.5 10 4.5 A3.5 3.5 0 0 0 10 11.5 Q10.6 11.5 11.3 11.3" fill="none" stroke="#fff" stroke-width="1.6"/><rect x="9.3" y="5.9" width="1.5" height="4.2" fill="#f2b2b2"/></svg><svg style="left:72px;top:2px" width="16" height="16" viewBox="0 0 16 16"><circle cx="8" cy="8" r="6.9" fill="#f2c51d" /></svg></div><div style="position:absolute;left:1px;top:376px;width:12px;height:1px;background:#d4d6e4"></div><div style="position:absolute;left:0;top:395px;width:1910px;height:19px;overflow:hidden;"><div style="position:absolute;left:13px;top:0;width:1882px;height:19px;background:#d9d9d9"></div><div style="position:absolute;left:13px;top:0;width:1882px;height:1px;background:#dadada"></div><div style="position:absolute;right:1741px;top:3.69px;line-height:13px;font-size:11px;color:#111;white-space:nowrap">812</div><div style="position:absolute;left:173px;top:3.69px;line-height:13px;font-size:11px;color:#111;white-space:nowrap">VR-21-1-000079</div><div style="position:absolute;left:267px;top:3.69px;line-height:13px;font-size:11px;color:#111;white-space:nowrap">2021.10.04</div><div style="position:absolute;left:430px;top:3.69px;line-height:13px;font-size:11px;color:#111;white-space:nowrap">2021.10.08</div><div style="position:absolute;left:1830px;top:3.69px;line-height:13px;font-size:11px;color:#111;white-space:nowrap;letter-spacing:-0.45px">Számlázható</div><svg style="left:27px;top:2px" width="16" height="16" viewBox="0 0 16 16"><circle cx="8" cy="8" r="6.9" fill="#c8171b" stroke="#fff" stroke-width="0.6" stroke-opacity="0.6"/><path d="M11.3 4.7 Q10.6 4.5 10 4.5 A3.5 3.5 0 0 0 10 11.5 Q10.6 11.5 11.3 11.3" fill="none" stroke="#fff" stroke-width="1.6"/><rect x="9.3" y="5.9" width="1.5" height="4.2" fill="#f2b2b2"/></svg><svg style="left:72px;top:2px" width="16" height="16" viewBox="0 0 16 16"><circle cx="8" cy="8" r="6.9" fill="#1d5e1d" /></svg></div><div style="position:absolute;left:1px;top:395px;width:12px;height:1px;background:#d4d6e4"></div><div style="position:absolute;left:0;top:414px;width:1910px;height:19px;overflow:hidden;"><div style="position:absolute;left:13px;top:0;width:1882px;height:19px;background:#fff"></div><div style="position:absolute;left:13px;top:0;width:1882px;height:1px;background:#dadada"></div><div style="position:absolute;left:57px;top:0;width:1px;height:19px;background:#dcdce0"></div><div style="position:absolute;left:103px;top:0;width:1px;height:19px;background:#dcdce0"></div><div style="position:absolute;left:171px;top:0;width:1px;height:19px;background:#dcdce0"></div><div style="position:absolute;left:264px;top:0;width:1px;height:19px;background:#dcdce0"></div><div style="position:absolute;left:328px;top:0;width:1px;height:19px;background:#dcdce0"></div><div style="position:absolute;left:427px;top:0;width:1px;height:19px;background:#dcdce0"></div><div style="position:absolute;left:500px;top:0;width:1px;height:19px;background:#dcdce0"></div><div style="position:absolute;left:1692px;top:0;width:1px;height:19px;background:#dcdce0"></div><div style="position:absolute;left:1827px;top:0;width:1px;height:19px;background:#dcdce0"></div><div style="position:absolute;left:1894px;top:0;width:1px;height:19px;background:#dcdce0"></div><div style="position:absolute;right:1741px;top:3.69px;line-height:13px;font-size:11px;color:#111;white-space:nowrap">810</div><div style="position:absolute;left:173px;top:3.69px;line-height:13px;font-size:11px;color:#111;white-space:nowrap">VR-21-1-000078</div><div style="position:absolute;left:267px;top:3.69px;line-height:13px;font-size:11px;color:#111;white-space:nowrap">2021.10.04</div><div style="position:absolute;left:430px;top:3.69px;line-height:13px;font-size:11px;color:#111;white-space:nowrap">2021.10.08</div><div style="position:absolute;left:1830px;top:3.69px;line-height:13px;font-size:11px;color:#111;white-space:nowrap;letter-spacing:-0.45px">Számlázható</div><svg style="left:27px;top:2px" width="16" height="16" viewBox="0 0 16 16"><circle cx="8" cy="8" r="6.9" fill="#c8171b" stroke="#fff" stroke-width="0.6" stroke-opacity="0.6"/><path d="M11.3 4.7 Q10.6 4.5 10 4.5 A3.5 3.5 0 0 0 10 11.5 Q10.6 11.5 11.3 11.3" fill="none" stroke="#fff" stroke-width="1.6"/><rect x="9.3" y="5.9" width="1.5" height="4.2" fill="#f2b2b2"/></svg><svg style="left:72px;top:2px" width="16" height="16" viewBox="0 0 16 16"><circle cx="8" cy="8" r="6.9" fill="#f2c51d" /></svg></div><div style="position:absolute;left:1px;top:414px;width:12px;height:1px;background:#d4d6e4"></div><div style="position:absolute;left:0;top:433px;width:1910px;height:19px;overflow:hidden;"><div style="position:absolute;left:13px;top:0;width:1882px;height:19px;background:#d9d9d9"></div><div style="position:absolute;left:13px;top:0;width:1882px;height:1px;background:#dadada"></div><div style="position:absolute;right:1741px;top:3.69px;line-height:13px;font-size:11px;color:#111;white-space:nowrap">800</div><div style="position:absolute;left:173px;top:3.69px;line-height:13px;font-size:11px;color:#111;white-space:nowrap">VR-21-1-000077</div><div style="position:absolute;left:267px;top:3.69px;line-height:13px;font-size:11px;color:#111;white-space:nowrap">2021.09.29</div><div style="position:absolute;left:430px;top:3.69px;line-height:13px;font-size:11px;color:#111;white-space:nowrap">2021.10.03</div><div style="position:absolute;left:1830px;top:3.69px;line-height:13px;font-size:11px;color:#111;white-space:nowrap;letter-spacing:-0.45px">Számlázható</div><svg style="left:27px;top:2px" width="16" height="16" viewBox="0 0 16 16"><circle cx="8" cy="8" r="6.9" fill="#c8171b" stroke="#fff" stroke-width="0.6" stroke-opacity="0.6"/><path d="M11.3 4.7 Q10.6 4.5 10 4.5 A3.5 3.5 0 0 0 10 11.5 Q10.6 11.5 11.3 11.3" fill="none" stroke="#fff" stroke-width="1.6"/><rect x="9.3" y="5.9" width="1.5" height="4.2" fill="#f2b2b2"/></svg><svg style="left:72px;top:2px" width="16" height="16" viewBox="0 0 16 16"><circle cx="8" cy="8" r="6.9" fill="#1d5e1d" /></svg></div><div style="position:absolute;left:1px;top:433px;width:12px;height:1px;background:#d4d6e4"></div><div style="position:absolute;left:0;top:452px;width:1910px;height:19px;overflow:hidden;"><div style="position:absolute;left:13px;top:0;width:1882px;height:19px;background:#fff"></div><div style="position:absolute;left:13px;top:0;width:1882px;height:1px;background:#dadada"></div><div style="position:absolute;left:57px;top:0;width:1px;height:19px;background:#dcdce0"></div><div style="position:absolute;left:103px;top:0;width:1px;height:19px;background:#dcdce0"></div><div style="position:absolute;left:171px;top:0;width:1px;height:19px;background:#dcdce0"></div><div style="position:absolute;left:264px;top:0;width:1px;height:19px;background:#dcdce0"></div><div style="position:absolute;left:328px;top:0;width:1px;height:19px;background:#dcdce0"></div><div style="position:absolute;left:427px;top:0;width:1px;height:19px;background:#dcdce0"></div><div style="position:absolute;left:500px;top:0;width:1px;height:19px;background:#dcdce0"></div><div style="position:absolute;left:1692px;top:0;width:1px;height:19px;background:#dcdce0"></div><div style="position:absolute;left:1827px;top:0;width:1px;height:19px;background:#dcdce0"></div><div style="position:absolute;left:1894px;top:0;width:1px;height:19px;background:#dcdce0"></div><div style="position:absolute;right:1741px;top:3.69px;line-height:13px;font-size:11px;color:#111;white-space:nowrap">796</div><div style="position:absolute;left:173px;top:3.69px;line-height:13px;font-size:11px;color:#111;white-space:nowrap">VR-21-1-000076</div><div style="position:absolute;left:267px;top:3.69px;line-height:13px;font-size:11px;color:#111;white-space:nowrap">2021.09.29</div><div style="position:absolute;left:430px;top:3.69px;line-height:13px;font-size:11px;color:#111;white-space:nowrap">2021.10.03</div><div style="position:absolute;left:1830px;top:3.69px;line-height:13px;font-size:11px;color:#111;white-space:nowrap;letter-spacing:-0.45px">Számlázható</div><svg style="left:27px;top:2px" width="16" height="16" viewBox="0 0 16 16"><circle cx="8" cy="8" r="6.9" fill="#1d5e1d" stroke="#fff" stroke-width="0.6" stroke-opacity="0.6"/><path d="M11.3 4.7 Q10.6 4.5 10 4.5 A3.5 3.5 0 0 0 10 11.5 Q10.6 11.5 11.3 11.3" fill="none" stroke="#fff" stroke-width="1.6"/><rect x="9.3" y="5.9" width="1.5" height="4.2" fill="#f2b2b2"/></svg><svg style="left:72px;top:2px" width="16" height="16" viewBox="0 0 16 16"><circle cx="8" cy="8" r="6.9" fill="#1d5e1d" /></svg></div><div style="position:absolute;left:1px;top:452px;width:12px;height:1px;background:#d4d6e4"></div><div style="position:absolute;left:0;top:471px;width:1910px;height:19px;overflow:hidden;"><div style="position:absolute;left:13px;top:0;width:1882px;height:19px;background:#d9d9d9"></div><div style="position:absolute;left:13px;top:0;width:1882px;height:1px;background:#dadada"></div><div style="position:absolute;right:1741px;top:3.69px;line-height:13px;font-size:11px;color:#111;white-space:nowrap">783</div><div style="position:absolute;left:173px;top:3.69px;line-height:13px;font-size:11px;color:#111;white-space:nowrap">VR-21-1-000075</div><div style="position:absolute;left:267px;top:3.69px;line-height:13px;font-size:11px;color:#111;white-space:nowrap">2021.09.27</div><div style="position:absolute;left:430px;top:3.69px;line-height:13px;font-size:11px;color:#111;white-space:nowrap">2021.10.01</div><div style="position:absolute;left:1830px;top:3.69px;line-height:13px;font-size:11px;color:#111;white-space:nowrap;letter-spacing:-0.45px">Számlázható</div><svg style="left:27px;top:2px" width="16" height="16" viewBox="0 0 16 16"><circle cx="8" cy="8" r="6.9" fill="#c8171b" stroke="#fff" stroke-width="0.6" stroke-opacity="0.6"/><path d="M11.3 4.7 Q10.6 4.5 10 4.5 A3.5 3.5 0 0 0 10 11.5 Q10.6 11.5 11.3 11.3" fill="none" stroke="#fff" stroke-width="1.6"/><rect x="9.3" y="5.9" width="1.5" height="4.2" fill="#f2b2b2"/></svg><svg style="left:72px;top:2px" width="16" height="16" viewBox="0 0 16 16"><circle cx="8" cy="8" r="6.9" fill="#f2c51d" /></svg></div><div style="position:absolute;left:1px;top:471px;width:12px;height:1px;background:#d4d6e4"></div><div style="position:absolute;left:0;top:490px;width:1910px;height:19px;overflow:hidden;"><div style="position:absolute;left:13px;top:0;width:1882px;height:19px;background:#fff"></div><div style="position:absolute;left:13px;top:0;width:1882px;height:1px;background:#dadada"></div><div style="position:absolute;left:57px;top:0;width:1px;height:19px;background:#dcdce0"></div><div style="position:absolute;left:103px;top:0;width:1px;height:19px;background:#dcdce0"></div><div style="position:absolute;left:171px;top:0;width:1px;height:19px;background:#dcdce0"></div><div style="position:absolute;left:264px;top:0;width:1px;height:19px;background:#dcdce0"></div><div style="position:absolute;left:328px;top:0;width:1px;height:19px;background:#dcdce0"></div><div style="position:absolute;left:427px;top:0;width:1px;height:19px;background:#dcdce0"></div><div style="position:absolute;left:500px;top:0;width:1px;height:19px;background:#dcdce0"></div><div style="position:absolute;left:1692px;top:0;width:1px;height:19px;background:#dcdce0"></div><div style="position:absolute;left:1827px;top:0;width:1px;height:19px;background:#dcdce0"></div><div style="position:absolute;left:1894px;top:0;width:1px;height:19px;background:#dcdce0"></div><div style="position:absolute;right:1741px;top:3.69px;line-height:13px;font-size:11px;color:#111;white-space:nowrap">764</div><div style="position:absolute;left:173px;top:3.69px;line-height:13px;font-size:11px;color:#111;white-space:nowrap">VR-21-1-000073</div><div style="position:absolute;left:267px;top:3.69px;line-height:13px;font-size:11px;color:#111;white-space:nowrap">2021.09.24</div><div style="position:absolute;left:430px;top:3.69px;line-height:13px;font-size:11px;color:#111;white-space:nowrap">2021.09.28</div><div style="position:absolute;left:1830px;top:3.69px;line-height:13px;font-size:11px;color:#111;white-space:nowrap;letter-spacing:-0.45px">Számlázható</div><svg style="left:27px;top:2px" width="16" height="16" viewBox="0 0 16 16"><circle cx="8" cy="8" r="6.9" fill="#c8171b" stroke="#fff" stroke-width="0.6" stroke-opacity="0.6"/><path d="M11.3 4.7 Q10.6 4.5 10 4.5 A3.5 3.5 0 0 0 10 11.5 Q10.6 11.5 11.3 11.3" fill="none" stroke="#fff" stroke-width="1.6"/><rect x="9.3" y="5.9" width="1.5" height="4.2" fill="#f2b2b2"/></svg><svg style="left:72px;top:2px" width="16" height="16" viewBox="0 0 16 16"><circle cx="8" cy="8" r="6.9" fill="#f2c51d" /></svg></div><div style="position:absolute;left:1px;top:490px;width:12px;height:1px;background:#d4d6e4"></div><div style="position:absolute;left:0;top:509px;width:1910px;height:19px;overflow:hidden;"><div style="position:absolute;left:13px;top:0;width:1882px;height:19px;background:#d9d9d9"></div><div style="position:absolute;left:13px;top:0;width:1882px;height:1px;background:#dadada"></div><div style="position:absolute;right:1741px;top:3.69px;line-height:13px;font-size:11px;color:#111;white-space:nowrap">738</div><div style="position:absolute;left:173px;top:3.69px;line-height:13px;font-size:11px;color:#111;white-space:nowrap">VRF-21-1-000011</div><div style="position:absolute;left:267px;top:3.69px;line-height:13px;font-size:11px;color:#111;white-space:nowrap">2021.09.20</div><div style="position:absolute;left:430px;top:3.69px;line-height:13px;font-size:11px;color:#111;white-space:nowrap">2021.09.24</div><div style="position:absolute;left:1830px;top:3.69px;line-height:13px;font-size:11px;color:#111;white-space:nowrap;letter-spacing:-0.45px">Számlázható</div><svg style="left:27px;top:2px" width="16" height="16" viewBox="0 0 16 16"><circle cx="8" cy="8" r="6.9" fill="#c8171b" stroke="#fff" stroke-width="0.6" stroke-opacity="0.6"/><path d="M11.3 4.7 Q10.6 4.5 10 4.5 A3.5 3.5 0 0 0 10 11.5 Q10.6 11.5 11.3 11.3" fill="none" stroke="#fff" stroke-width="1.6"/><rect x="9.3" y="5.9" width="1.5" height="4.2" fill="#f2b2b2"/></svg><svg style="left:72px;top:2px" width="16" height="16" viewBox="0 0 16 16"><circle cx="8" cy="8" r="6.9" fill="#1d5e1d" /></svg></div><div style="position:absolute;left:1px;top:509px;width:12px;height:1px;background:#d4d6e4"></div><div style="position:absolute;left:0;top:528px;width:1910px;height:19px;overflow:hidden;"><div style="position:absolute;left:13px;top:0;width:1882px;height:19px;background:#fff"></div><div style="position:absolute;left:13px;top:0;width:1882px;height:1px;background:#dadada"></div><div style="position:absolute;left:57px;top:0;width:1px;height:19px;background:#dcdce0"></div><div style="position:absolute;left:103px;top:0;width:1px;height:19px;background:#dcdce0"></div><div style="position:absolute;left:171px;top:0;width:1px;height:19px;background:#dcdce0"></div><div style="position:absolute;left:264px;top:0;width:1px;height:19px;background:#dcdce0"></div><div style="position:absolute;left:328px;top:0;width:1px;height:19px;background:#dcdce0"></div><div style="position:absolute;left:427px;top:0;width:1px;height:19px;background:#dcdce0"></div><div style="position:absolute;left:500px;top:0;width:1px;height:19px;background:#dcdce0"></div><div style="position:absolute;left:1692px;top:0;width:1px;height:19px;background:#dcdce0"></div><div style="position:absolute;left:1827px;top:0;width:1px;height:19px;background:#dcdce0"></div><div style="position:absolute;left:1894px;top:0;width:1px;height:19px;background:#dcdce0"></div><div style="position:absolute;right:1741px;top:3.69px;line-height:13px;font-size:11px;color:#111;white-space:nowrap">737</div><div style="position:absolute;left:173px;top:3.69px;line-height:13px;font-size:11px;color:#111;white-space:nowrap">VRF-21-1-000010</div><div style="position:absolute;left:267px;top:3.69px;line-height:13px;font-size:11px;color:#111;white-space:nowrap">2021.09.20</div><div style="position:absolute;left:430px;top:3.69px;line-height:13px;font-size:11px;color:#111;white-space:nowrap">2021.09.24</div><div style="position:absolute;left:1830px;top:3.69px;line-height:13px;font-size:11px;color:#111;white-space:nowrap;letter-spacing:-0.45px">Számlázható</div><svg style="left:27px;top:2px" width="16" height="16" viewBox="0 0 16 16"><circle cx="8" cy="8" r="6.9" fill="#c8171b" stroke="#fff" stroke-width="0.6" stroke-opacity="0.6"/><path d="M11.3 4.7 Q10.6 4.5 10 4.5 A3.5 3.5 0 0 0 10 11.5 Q10.6 11.5 11.3 11.3" fill="none" stroke="#fff" stroke-width="1.6"/><rect x="9.3" y="5.9" width="1.5" height="4.2" fill="#f2b2b2"/></svg><svg style="left:72px;top:2px" width="16" height="16" viewBox="0 0 16 16"><circle cx="8" cy="8" r="6.9" fill="#1d5e1d" /></svg></div><div style="position:absolute;left:1px;top:528px;width:12px;height:1px;background:#d4d6e4"></div><div style="position:absolute;left:0;top:547px;width:1910px;height:19px;overflow:hidden;"><div style="position:absolute;left:13px;top:0;width:1882px;height:19px;background:#d9d9d9"></div><div style="position:absolute;left:13px;top:0;width:1882px;height:1px;background:#dadada"></div><div style="position:absolute;right:1741px;top:3.69px;line-height:13px;font-size:11px;color:#111;white-space:nowrap">735</div><div style="position:absolute;left:173px;top:3.69px;line-height:13px;font-size:11px;color:#111;white-space:nowrap">VRF-21-1-000008</div><div style="position:absolute;left:267px;top:3.69px;line-height:13px;font-size:11px;color:#111;white-space:nowrap">2021.09.20</div><div style="position:absolute;left:430px;top:3.69px;line-height:13px;font-size:11px;color:#111;white-space:nowrap">2021.09.24</div><div style="position:absolute;left:1830px;top:3.69px;line-height:13px;font-size:11px;color:#111;white-space:nowrap;letter-spacing:-0.45px">Számlázható</div><svg style="left:27px;top:2px" width="16" height="16" viewBox="0 0 16 16"><circle cx="8" cy="8" r="6.9" fill="#c8171b" stroke="#fff" stroke-width="0.6" stroke-opacity="0.6"/><path d="M11.3 4.7 Q10.6 4.5 10 4.5 A3.5 3.5 0 0 0 10 11.5 Q10.6 11.5 11.3 11.3" fill="none" stroke="#fff" stroke-width="1.6"/><rect x="9.3" y="5.9" width="1.5" height="4.2" fill="#f2b2b2"/></svg><svg style="left:72px;top:2px" width="16" height="16" viewBox="0 0 16 16"><circle cx="8" cy="8" r="6.9" fill="#1d5e1d" /></svg></div><div style="position:absolute;left:1px;top:547px;width:12px;height:1px;background:#d4d6e4"></div><div style="position:absolute;left:0;top:566px;width:1910px;height:19px;overflow:hidden;"><div style="position:absolute;left:13px;top:0;width:1882px;height:19px;background:#fff"></div><div style="position:absolute;left:13px;top:0;width:1882px;height:1px;background:#dadada"></div><div style="position:absolute;left:57px;top:0;width:1px;height:19px;background:#dcdce0"></div><div style="position:absolute;left:103px;top:0;width:1px;height:19px;background:#dcdce0"></div><div style="position:absolute;left:171px;top:0;width:1px;height:19px;background:#dcdce0"></div><div style="position:absolute;left:264px;top:0;width:1px;height:19px;background:#dcdce0"></div><div style="position:absolute;left:328px;top:0;width:1px;height:19px;background:#dcdce0"></div><div style="position:absolute;left:427px;top:0;width:1px;height:19px;background:#dcdce0"></div><div style="position:absolute;left:500px;top:0;width:1px;height:19px;background:#dcdce0"></div><div style="position:absolute;left:1692px;top:0;width:1px;height:19px;background:#dcdce0"></div><div style="position:absolute;left:1827px;top:0;width:1px;height:19px;background:#dcdce0"></div><div style="position:absolute;left:1894px;top:0;width:1px;height:19px;background:#dcdce0"></div><div style="position:absolute;right:1741px;top:3.69px;line-height:13px;font-size:11px;color:#111;white-space:nowrap">734</div><div style="position:absolute;left:173px;top:3.69px;line-height:13px;font-size:11px;color:#111;white-space:nowrap">VRF-21-1-000007</div><div style="position:absolute;left:267px;top:3.69px;line-height:13px;font-size:11px;color:#111;white-space:nowrap">2021.09.20</div><div style="position:absolute;left:430px;top:3.69px;line-height:13px;font-size:11px;color:#111;white-space:nowrap">2021.09.24</div><div style="position:absolute;left:1830px;top:3.69px;line-height:13px;font-size:11px;color:#111;white-space:nowrap;letter-spacing:-0.45px">Számlázható</div><svg style="left:27px;top:2px" width="16" height="16" viewBox="0 0 16 16"><circle cx="8" cy="8" r="6.9" fill="#c8171b" stroke="#fff" stroke-width="0.6" stroke-opacity="0.6"/><path d="M11.3 4.7 Q10.6 4.5 10 4.5 A3.5 3.5 0 0 0 10 11.5 Q10.6 11.5 11.3 11.3" fill="none" stroke="#fff" stroke-width="1.6"/><rect x="9.3" y="5.9" width="1.5" height="4.2" fill="#f2b2b2"/></svg><svg style="left:72px;top:2px" width="16" height="16" viewBox="0 0 16 16"><circle cx="8" cy="8" r="6.9" fill="#1d5e1d" /></svg></div><div style="position:absolute;left:1px;top:566px;width:12px;height:1px;background:#d4d6e4"></div><div style="position:absolute;left:0;top:585px;width:1910px;height:19px;overflow:hidden;"><div style="position:absolute;left:13px;top:0;width:1882px;height:19px;background:#d9d9d9"></div><div style="position:absolute;left:13px;top:0;width:1882px;height:1px;background:#dadada"></div><div style="position:absolute;right:1741px;top:3.69px;line-height:13px;font-size:11px;color:#111;white-space:nowrap">733</div><div style="position:absolute;left:173px;top:3.69px;line-height:13px;font-size:11px;color:#111;white-space:nowrap">VR-21-1-000070</div><div style="position:absolute;left:267px;top:3.69px;line-height:13px;font-size:11px;color:#111;white-space:nowrap">2021.09.20</div><div style="position:absolute;left:430px;top:3.69px;line-height:13px;font-size:11px;color:#111;white-space:nowrap">2021.09.24</div><div style="position:absolute;left:1830px;top:3.69px;line-height:13px;font-size:11px;color:#111;white-space:nowrap;letter-spacing:-0.45px">Számlázható</div><svg style="left:27px;top:2px" width="16" height="16" viewBox="0 0 16 16"><circle cx="8" cy="8" r="6.9" fill="#c8171b" stroke="#fff" stroke-width="0.6" stroke-opacity="0.6"/><path d="M11.3 4.7 Q10.6 4.5 10 4.5 A3.5 3.5 0 0 0 10 11.5 Q10.6 11.5 11.3 11.3" fill="none" stroke="#fff" stroke-width="1.6"/><rect x="9.3" y="5.9" width="1.5" height="4.2" fill="#f2b2b2"/></svg><svg style="left:72px;top:2px" width="16" height="16" viewBox="0 0 16 16"><circle cx="8" cy="8" r="6.9" fill="#1d5e1d" /></svg></div><div style="position:absolute;left:1px;top:585px;width:12px;height:1px;background:#d4d6e4"></div><div style="position:absolute;left:0;top:604px;width:1910px;height:19px;overflow:hidden;"><div style="position:absolute;left:13px;top:0;width:1882px;height:19px;background:#fff"></div><div style="position:absolute;left:13px;top:0;width:1882px;height:1px;background:#dadada"></div><div style="position:absolute;left:57px;top:0;width:1px;height:19px;background:#dcdce0"></div><div style="position:absolute;left:103px;top:0;width:1px;height:19px;background:#dcdce0"></div><div style="position:absolute;left:171px;top:0;width:1px;height:19px;background:#dcdce0"></div><div style="position:absolute;left:264px;top:0;width:1px;height:19px;background:#dcdce0"></div><div style="position:absolute;left:328px;top:0;width:1px;height:19px;background:#dcdce0"></div><div style="position:absolute;left:427px;top:0;width:1px;height:19px;background:#dcdce0"></div><div style="position:absolute;left:500px;top:0;width:1px;height:19px;background:#dcdce0"></div><div style="position:absolute;left:1692px;top:0;width:1px;height:19px;background:#dcdce0"></div><div style="position:absolute;left:1827px;top:0;width:1px;height:19px;background:#dcdce0"></div><div style="position:absolute;left:1894px;top:0;width:1px;height:19px;background:#dcdce0"></div><div style="position:absolute;right:1741px;top:3.69px;line-height:13px;font-size:11px;color:#111;white-space:nowrap">732</div><div style="position:absolute;left:173px;top:3.69px;line-height:13px;font-size:11px;color:#111;white-space:nowrap">VRF-21-1-000006</div><div style="position:absolute;left:267px;top:3.69px;line-height:13px;font-size:11px;color:#111;white-space:nowrap">2021.09.20</div><div style="position:absolute;left:430px;top:3.69px;line-height:13px;font-size:11px;color:#111;white-space:nowrap">2021.09.24</div><div style="position:absolute;left:1830px;top:3.69px;line-height:13px;font-size:11px;color:#111;white-space:nowrap;letter-spacing:-0.45px">Számlázható</div><svg style="left:27px;top:2px" width="16" height="16" viewBox="0 0 16 16"><circle cx="8" cy="8" r="6.9" fill="#c8171b" stroke="#fff" stroke-width="0.6" stroke-opacity="0.6"/><path d="M11.3 4.7 Q10.6 4.5 10 4.5 A3.5 3.5 0 0 0 10 11.5 Q10.6 11.5 11.3 11.3" fill="none" stroke="#fff" stroke-width="1.6"/><rect x="9.3" y="5.9" width="1.5" height="4.2" fill="#f2b2b2"/></svg><svg style="left:72px;top:2px" width="16" height="16" viewBox="0 0 16 16"><circle cx="8" cy="8" r="6.9" fill="#1d5e1d" /></svg></div><div style="position:absolute;left:1px;top:604px;width:12px;height:1px;background:#d4d6e4"></div><div style="position:absolute;left:0;top:623px;width:1910px;height:19px;overflow:hidden;"><div style="position:absolute;left:13px;top:0;width:1882px;height:19px;background:#d9d9d9"></div><div style="position:absolute;left:13px;top:0;width:1882px;height:1px;background:#dadada"></div><div style="position:absolute;right:1741px;top:3.69px;line-height:13px;font-size:11px;color:#111;white-space:nowrap">731</div><div style="position:absolute;left:173px;top:3.69px;line-height:13px;font-size:11px;color:#111;white-space:nowrap">VR-21-1-000069</div><div style="position:absolute;left:267px;top:3.69px;line-height:13px;font-size:11px;color:#111;white-space:nowrap">2021.09.20</div><div style="position:absolute;left:430px;top:3.69px;line-height:13px;font-size:11px;color:#111;white-space:nowrap">2021.09.24</div><div style="position:absolute;left:1830px;top:3.69px;line-height:13px;font-size:11px;color:#111;white-space:nowrap;letter-spacing:-0.45px">Számlázható</div><svg style="left:27px;top:2px" width="16" height="16" viewBox="0 0 16 16"><circle cx="8" cy="8" r="6.9" fill="#c8171b" stroke="#fff" stroke-width="0.6" stroke-opacity="0.6"/><path d="M11.3 4.7 Q10.6 4.5 10 4.5 A3.5 3.5 0 0 0 10 11.5 Q10.6 11.5 11.3 11.3" fill="none" stroke="#fff" stroke-width="1.6"/><rect x="9.3" y="5.9" width="1.5" height="4.2" fill="#f2b2b2"/></svg><svg style="left:72px;top:2px" width="16" height="16" viewBox="0 0 16 16"><circle cx="8" cy="8" r="6.9" fill="#1d5e1d" /></svg></div><div style="position:absolute;left:1px;top:623px;width:12px;height:1px;background:#d4d6e4"></div><div style="position:absolute;left:0;top:642px;width:1910px;height:19px;overflow:hidden;"><div style="position:absolute;left:13px;top:0;width:1882px;height:19px;background:#fff"></div><div style="position:absolute;left:13px;top:0;width:1882px;height:1px;background:#dadada"></div><div style="position:absolute;left:57px;top:0;width:1px;height:19px;background:#dcdce0"></div><div style="position:absolute;left:103px;top:0;width:1px;height:19px;background:#dcdce0"></div><div style="position:absolute;left:171px;top:0;width:1px;height:19px;background:#dcdce0"></div><div style="position:absolute;left:264px;top:0;width:1px;height:19px;background:#dcdce0"></div><div style="position:absolute;left:328px;top:0;width:1px;height:19px;background:#dcdce0"></div><div style="position:absolute;left:427px;top:0;width:1px;height:19px;background:#dcdce0"></div><div style="position:absolute;left:500px;top:0;width:1px;height:19px;background:#dcdce0"></div><div style="position:absolute;left:1692px;top:0;width:1px;height:19px;background:#dcdce0"></div><div style="position:absolute;left:1827px;top:0;width:1px;height:19px;background:#dcdce0"></div><div style="position:absolute;left:1894px;top:0;width:1px;height:19px;background:#dcdce0"></div><div style="position:absolute;right:1741px;top:3.69px;line-height:13px;font-size:11px;color:#111;white-space:nowrap">730</div><div style="position:absolute;left:173px;top:3.69px;line-height:13px;font-size:11px;color:#111;white-space:nowrap">VR-21-1-000068</div><div style="position:absolute;left:267px;top:3.69px;line-height:13px;font-size:11px;color:#111;white-space:nowrap">2021.09.20</div><div style="position:absolute;left:430px;top:3.69px;line-height:13px;font-size:11px;color:#111;white-space:nowrap">2021.09.24</div><div style="position:absolute;left:1830px;top:3.69px;line-height:13px;font-size:11px;color:#111;white-space:nowrap;letter-spacing:-0.45px">Számlázható</div><svg style="left:27px;top:2px" width="16" height="16" viewBox="0 0 16 16"><circle cx="8" cy="8" r="6.9" fill="#c8171b" stroke="#fff" stroke-width="0.6" stroke-opacity="0.6"/><path d="M11.3 4.7 Q10.6 4.5 10 4.5 A3.5 3.5 0 0 0 10 11.5 Q10.6 11.5 11.3 11.3" fill="none" stroke="#fff" stroke-width="1.6"/><rect x="9.3" y="5.9" width="1.5" height="4.2" fill="#f2b2b2"/></svg><svg style="left:72px;top:2px" width="16" height="16" viewBox="0 0 16 16"><circle cx="8" cy="8" r="6.9" fill="#1d5e1d" /></svg></div><div style="position:absolute;left:1px;top:642px;width:12px;height:1px;background:#d4d6e4"></div><div style="position:absolute;left:0;top:661px;width:1910px;height:19px;overflow:hidden;"><div style="position:absolute;left:13px;top:0;width:1882px;height:19px;background:#d9d9d9"></div><div style="position:absolute;left:13px;top:0;width:1882px;height:1px;background:#dadada"></div><div style="position:absolute;right:1741px;top:3.69px;line-height:13px;font-size:11px;color:#111;white-space:nowrap">717</div><div style="position:absolute;left:173px;top:3.69px;line-height:13px;font-size:11px;color:#111;white-space:nowrap">VR-21-1-000067</div><div style="position:absolute;left:267px;top:3.69px;line-height:13px;font-size:11px;color:#111;white-space:nowrap">2021.09.13</div><div style="position:absolute;left:430px;top:3.69px;line-height:13px;font-size:11px;color:#111;white-space:nowrap">2021.09.17</div><div style="position:absolute;left:1830px;top:3.69px;line-height:13px;font-size:11px;color:#111;white-space:nowrap;letter-spacing:-0.45px">Számlázható</div><svg style="left:27px;top:2px" width="16" height="16" viewBox="0 0 16 16"><circle cx="8" cy="8" r="6.9" fill="#c8171b" stroke="#fff" stroke-width="0.6" stroke-opacity="0.6"/><path d="M11.3 4.7 Q10.6 4.5 10 4.5 A3.5 3.5 0 0 0 10 11.5 Q10.6 11.5 11.3 11.3" fill="none" stroke="#fff" stroke-width="1.6"/><rect x="9.3" y="5.9" width="1.5" height="4.2" fill="#f2b2b2"/></svg><svg style="left:72px;top:2px" width="16" height="16" viewBox="0 0 16 16"><circle cx="8" cy="8" r="6.9" fill="#c8171b" /></svg></div><div style="position:absolute;left:1px;top:661px;width:12px;height:1px;background:#d4d6e4"></div><div style="position:absolute;left:0;top:680px;width:1910px;height:19px;overflow:hidden;"><div style="position:absolute;left:13px;top:0;width:1882px;height:19px;background:#fff"></div><div style="position:absolute;left:13px;top:0;width:1882px;height:1px;background:#dadada"></div><div style="position:absolute;left:57px;top:0;width:1px;height:19px;background:#dcdce0"></div><div style="position:absolute;left:103px;top:0;width:1px;height:19px;background:#dcdce0"></div><div style="position:absolute;left:171px;top:0;width:1px;height:19px;background:#dcdce0"></div><div style="position:absolute;left:264px;top:0;width:1px;height:19px;background:#dcdce0"></div><div style="position:absolute;left:328px;top:0;width:1px;height:19px;background:#dcdce0"></div><div style="position:absolute;left:427px;top:0;width:1px;height:19px;background:#dcdce0"></div><div style="position:absolute;left:500px;top:0;width:1px;height:19px;background:#dcdce0"></div><div style="position:absolute;left:1692px;top:0;width:1px;height:19px;background:#dcdce0"></div><div style="position:absolute;left:1827px;top:0;width:1px;height:19px;background:#dcdce0"></div><div style="position:absolute;left:1894px;top:0;width:1px;height:19px;background:#dcdce0"></div><div style="position:absolute;right:1741px;top:3.69px;line-height:13px;font-size:11px;color:#111;white-space:nowrap">716</div><div style="position:absolute;left:173px;top:3.69px;line-height:13px;font-size:11px;color:#111;white-space:nowrap">VR-21-1-000066</div><div style="position:absolute;left:267px;top:3.69px;line-height:13px;font-size:11px;color:#111;white-space:nowrap">2021.09.13</div><div style="position:absolute;left:430px;top:3.69px;line-height:13px;font-size:11px;color:#111;white-space:nowrap">2021.09.17</div><div style="position:absolute;left:1830px;top:3.69px;line-height:13px;font-size:11px;color:#111;white-space:nowrap;letter-spacing:-0.45px">Számlázható</div><svg style="left:27px;top:2px" width="16" height="16" viewBox="0 0 16 16"><circle cx="8" cy="8" r="6.9" fill="#c8171b" stroke="#fff" stroke-width="0.6" stroke-opacity="0.6"/><path d="M11.3 4.7 Q10.6 4.5 10 4.5 A3.5 3.5 0 0 0 10 11.5 Q10.6 11.5 11.3 11.3" fill="none" stroke="#fff" stroke-width="1.6"/><rect x="9.3" y="5.9" width="1.5" height="4.2" fill="#f2b2b2"/></svg><svg style="left:72px;top:2px" width="16" height="16" viewBox="0 0 16 16"><circle cx="8" cy="8" r="6.9" fill="#c8171b" /></svg></div><div style="position:absolute;left:1px;top:680px;width:12px;height:1px;background:#d4d6e4"></div><div style="position:absolute;left:0;top:699px;width:1910px;height:19px;overflow:hidden;"><div style="position:absolute;left:13px;top:0;width:1882px;height:19px;background:#d9d9d9"></div><div style="position:absolute;left:13px;top:0;width:1882px;height:1px;background:#dadada"></div><div style="position:absolute;right:1741px;top:3.69px;line-height:13px;font-size:11px;color:#111;white-space:nowrap">715</div><div style="position:absolute;left:173px;top:3.69px;line-height:13px;font-size:11px;color:#111;white-space:nowrap">VR-21-1-000065</div><div style="position:absolute;left:267px;top:3.69px;line-height:13px;font-size:11px;color:#111;white-space:nowrap">2021.09.10</div><div style="position:absolute;left:430px;top:3.69px;line-height:13px;font-size:11px;color:#111;white-space:nowrap">2021.09.14</div><div style="position:absolute;left:1830px;top:3.69px;line-height:13px;font-size:11px;color:#111;white-space:nowrap;letter-spacing:-0.45px">Számlázható</div><svg style="left:27px;top:2px" width="16" height="16" viewBox="0 0 16 16"><circle cx="8" cy="8" r="6.9" fill="#c8171b" stroke="#fff" stroke-width="0.6" stroke-opacity="0.6"/><path d="M11.3 4.7 Q10.6 4.5 10 4.5 A3.5 3.5 0 0 0 10 11.5 Q10.6 11.5 11.3 11.3" fill="none" stroke="#fff" stroke-width="1.6"/><rect x="9.3" y="5.9" width="1.5" height="4.2" fill="#f2b2b2"/></svg><svg style="left:72px;top:2px" width="16" height="16" viewBox="0 0 16 16"><circle cx="8" cy="8" r="6.9" fill="#c8171b" /></svg></div><div style="position:absolute;left:1px;top:699px;width:12px;height:1px;background:#d4d6e4"></div><div style="position:absolute;left:0;top:718px;width:1910px;height:19px;overflow:hidden;"><div style="position:absolute;left:13px;top:0;width:1882px;height:19px;background:#fff"></div><div style="position:absolute;left:13px;top:0;width:1882px;height:1px;background:#dadada"></div><div style="position:absolute;left:57px;top:0;width:1px;height:19px;background:#dcdce0"></div><div style="position:absolute;left:103px;top:0;width:1px;height:19px;background:#dcdce0"></div><div style="position:absolute;left:171px;top:0;width:1px;height:19px;background:#dcdce0"></div><div style="position:absolute;left:264px;top:0;width:1px;height:19px;background:#dcdce0"></div><div style="position:absolute;left:328px;top:0;width:1px;height:19px;background:#dcdce0"></div><div style="position:absolute;left:427px;top:0;width:1px;height:19px;background:#dcdce0"></div><div style="position:absolute;left:500px;top:0;width:1px;height:19px;background:#dcdce0"></div><div style="position:absolute;left:1692px;top:0;width:1px;height:19px;background:#dcdce0"></div><div style="position:absolute;left:1827px;top:0;width:1px;height:19px;background:#dcdce0"></div><div style="position:absolute;left:1894px;top:0;width:1px;height:19px;background:#dcdce0"></div><div style="position:absolute;right:1741px;top:3.69px;line-height:13px;font-size:11px;color:#111;white-space:nowrap">711</div><div style="position:absolute;left:173px;top:3.69px;line-height:13px;font-size:11px;color:#111;white-space:nowrap">VR-21-1-000064</div><div style="position:absolute;left:267px;top:3.69px;line-height:13px;font-size:11px;color:#111;white-space:nowrap">2021.09.10</div><div style="position:absolute;left:430px;top:3.69px;line-height:13px;font-size:11px;color:#111;white-space:nowrap">2021.09.14</div><div style="position:absolute;left:1830px;top:3.69px;line-height:13px;font-size:11px;color:#111;white-space:nowrap;letter-spacing:-0.45px">Számlázható</div><svg style="left:27px;top:2px" width="16" height="16" viewBox="0 0 16 16"><circle cx="8" cy="8" r="6.9" fill="#c8171b" stroke="#fff" stroke-width="0.6" stroke-opacity="0.6"/><path d="M11.3 4.7 Q10.6 4.5 10 4.5 A3.5 3.5 0 0 0 10 11.5 Q10.6 11.5 11.3 11.3" fill="none" stroke="#fff" stroke-width="1.6"/><rect x="9.3" y="5.9" width="1.5" height="4.2" fill="#f2b2b2"/></svg><svg style="left:72px;top:2px" width="16" height="16" viewBox="0 0 16 16"><circle cx="8" cy="8" r="6.9" fill="#c8171b" /></svg></div><div style="position:absolute;left:1px;top:718px;width:12px;height:1px;background:#d4d6e4"></div><div style="position:absolute;left:0;top:737px;width:1910px;height:19px;overflow:hidden;"><div style="position:absolute;left:13px;top:0;width:1882px;height:19px;background:#d9d9d9"></div><div style="position:absolute;left:13px;top:0;width:1882px;height:1px;background:#dadada"></div><div style="position:absolute;right:1741px;top:3.69px;line-height:13px;font-size:11px;color:#111;white-space:nowrap">709</div><div style="position:absolute;left:173px;top:3.69px;line-height:13px;font-size:11px;color:#111;white-space:nowrap">VR-21-1-000063</div><div style="position:absolute;left:267px;top:3.69px;line-height:13px;font-size:11px;color:#111;white-space:nowrap">2021.09.10</div><div style="position:absolute;left:430px;top:3.69px;line-height:13px;font-size:11px;color:#111;white-space:nowrap">2021.09.14</div><div style="position:absolute;left:1830px;top:3.69px;line-height:13px;font-size:11px;color:#111;white-space:nowrap;letter-spacing:-0.45px">Számlázható</div><svg style="left:27px;top:2px" width="16" height="16" viewBox="0 0 16 16"><circle cx="8" cy="8" r="6.9" fill="#c8171b" stroke="#fff" stroke-width="0.6" stroke-opacity="0.6"/><path d="M11.3 4.7 Q10.6 4.5 10 4.5 A3.5 3.5 0 0 0 10 11.5 Q10.6 11.5 11.3 11.3" fill="none" stroke="#fff" stroke-width="1.6"/><rect x="9.3" y="5.9" width="1.5" height="4.2" fill="#f2b2b2"/></svg><svg style="left:72px;top:2px" width="16" height="16" viewBox="0 0 16 16"><circle cx="8" cy="8" r="6.9" fill="#c8171b" /></svg></div><div style="position:absolute;left:1px;top:737px;width:12px;height:1px;background:#d4d6e4"></div><div style="position:absolute;left:0;top:756px;width:1910px;height:5px;overflow:hidden;"><div style="position:absolute;left:13px;top:0;width:1882px;height:19px;background:#fff"></div><div style="position:absolute;left:13px;top:0;width:1882px;height:1px;background:#dadada"></div><div style="position:absolute;left:57px;top:0;width:1px;height:19px;background:#dcdce0"></div><div style="position:absolute;left:103px;top:0;width:1px;height:19px;background:#dcdce0"></div><div style="position:absolute;left:171px;top:0;width:1px;height:19px;background:#dcdce0"></div><div style="position:absolute;left:264px;top:0;width:1px;height:19px;background:#dcdce0"></div><div style="position:absolute;left:328px;top:0;width:1px;height:19px;background:#dcdce0"></div><div style="position:absolute;left:427px;top:0;width:1px;height:19px;background:#dcdce0"></div><div style="position:absolute;left:500px;top:0;width:1px;height:19px;background:#dcdce0"></div><div style="position:absolute;left:1692px;top:0;width:1px;height:19px;background:#dcdce0"></div><div style="position:absolute;left:1827px;top:0;width:1px;height:19px;background:#dcdce0"></div><div style="position:absolute;left:1894px;top:0;width:1px;height:19px;background:#dcdce0"></div><svg style="left:27px;top:2px" width="16" height="16" viewBox="0 0 16 16"><circle cx="8" cy="8" r="6.9" fill="#c8171b" stroke="#fff" stroke-width="0.6" stroke-opacity="0.6"/><path d="M11.3 4.7 Q10.6 4.5 10 4.5 A3.5 3.5 0 0 0 10 11.5 Q10.6 11.5 11.3 11.3" fill="none" stroke="#fff" stroke-width="1.6"/><rect x="9.3" y="5.9" width="1.5" height="4.2" fill="#f2b2b2"/></svg><svg style="left:72px;top:2px" width="16" height="16" viewBox="0 0 16 16"><circle cx="8" cy="8" r="6.9" fill="#1d5e1d" /></svg></div><div style="position:absolute;left:1px;top:756px;width:12px;height:1px;background:#d4d6e4"></div><div style="position:absolute;left:1px;top:281px;width:12px;height:480px;background:#fff"></div><div style="position:absolute;left:1px;top:281px;width:12px;height:1px;background:#d4d6e4"></div><div style="position:absolute;left:1px;top:300px;width:12px;height:1px;background:#d4d6e4"></div><div style="position:absolute;left:1px;top:319px;width:12px;height:1px;background:#d4d6e4"></div><div style="position:absolute;left:1px;top:338px;width:12px;height:1px;background:#d4d6e4"></div><div style="position:absolute;left:1px;top:357px;width:12px;height:1px;background:#d4d6e4"></div><div style="position:absolute;left:1px;top:376px;width:12px;height:1px;background:#d4d6e4"></div><div style="position:absolute;left:1px;top:395px;width:12px;height:1px;background:#d4d6e4"></div><div style="position:absolute;left:1px;top:414px;width:12px;height:1px;background:#d4d6e4"></div><div style="position:absolute;left:1px;top:433px;width:12px;height:1px;background:#d4d6e4"></div><div style="position:absolute;left:1px;top:452px;width:12px;height:1px;background:#d4d6e4"></div><div style="position:absolute;left:1px;top:471px;width:12px;height:1px;background:#d4d6e4"></div><div style="position:absolute;left:1px;top:490px;width:12px;height:1px;background:#d4d6e4"></div><div style="position:absolute;left:1px;top:509px;width:12px;height:1px;background:#d4d6e4"></div><div style="position:absolute;left:1px;top:528px;width:12px;height:1px;background:#d4d6e4"></div><div style="position:absolute;left:1px;top:547px;width:12px;height:1px;background:#d4d6e4"></div><div style="position:absolute;left:1px;top:566px;width:12px;height:1px;background:#d4d6e4"></div><div style="position:absolute;left:1px;top:585px;width:12px;height:1px;background:#d4d6e4"></div><div style="position:absolute;left:1px;top:604px;width:12px;height:1px;background:#d4d6e4"></div><div style="position:absolute;left:1px;top:623px;width:12px;height:1px;background:#d4d6e4"></div><div style="position:absolute;left:1px;top:642px;width:12px;height:1px;background:#d4d6e4"></div><div style="position:absolute;left:1px;top:661px;width:12px;height:1px;background:#d4d6e4"></div><div style="position:absolute;left:1px;top:680px;width:12px;height:1px;background:#d4d6e4"></div><div style="position:absolute;left:1px;top:699px;width:12px;height:1px;background:#d4d6e4"></div><div style="position:absolute;left:1px;top:718px;width:12px;height:1px;background:#d4d6e4"></div><div style="position:absolute;left:1px;top:737px;width:12px;height:1px;background:#d4d6e4"></div><div style="position:absolute;left:1px;top:756px;width:12px;height:1px;background:#d4d6e4"></div><div style="position:absolute;left:1px;top:281px;width:1894px;height:1px;background:#d4d6e4"></div><div style="position:absolute;left:12px;top:261px;width:1px;height:500px;background:#d4d6e4"></div><svg style="left:5px;top:287px" width="4" height="7" viewBox="0 0 4 7"><path d="M0 0 L4 3.5 L0 7Z" fill="#555"/></svg><div style="position:absolute;left:1px;top:761px;width:1894px;height:1px;background:#d6d6dc"></div><div style="position:absolute;left:0px;top:213px;width:1px;height:549px;background:#c8c8cc"></div><div style="position:absolute;left:1896px;top:214px;width:14px;height:547px;background:#e5e5e9"></div><svg style="left:1900px;top:219px" width="9" height="5" viewBox="0 0 9 5"><path d="M0 5 L4.5 0 L9 5Z" fill="#9b9b9b"/></svg><div style="position:absolute;left:1900px;top:231px;width:9px;height:178px;background:#b6b6b9"></div><svg style="left:1900px;top:750px" width="9" height="5" viewBox="0 0 9 5"><path d="M0 0 H9 L4.5 5Z" fill="#9b9b9b"/></svg><div style="position:absolute;left:0px;top:765px;width:1910px;height:1px;background:#dedee0"></div><div style="position:absolute;left:0px;top:766px;width:1910px;height:23px;background:#f0f0f0"></div><div style="position:absolute;left:3px;top:765px;width:49px;height:21px;background:#e4e4e6;border:1px solid #a8a8ac;box-sizing:border-box"></div><div style="position:absolute;top:769.69px;line-height:13px;font-size:11px;color:#111;white-space:nowrap;left:6px;">Ft</div><svg style="left:38px;top:772px" width="9" height="5" viewBox="0 0 9 5"><path d="M0.5 0.5 L4.5 4.5 L8.5 0.5" fill="none" stroke="#444" stroke-width="1"/></svg><div style="position:absolute;top:769.69px;line-height:13px;font-size:11px;color:#111;white-space:nowrap;left:60px;letter-spacing:0.050px;">Nettó össz.: 8 074 722,75 Ft; Áfa össz.: 2 180 178,75 Ft; Bruttó össz.: 10 254 901,5 Ft, ebből feldolgozatlan: 10 254 901,5 Ft</div><div style="position:absolute;left:0px;top:789px;width:1910px;height:1px;background:#dcdcdc"></div><div style="position:absolute;left:0px;top:803px;width:1910px;height:1px;background:#d4d4da"></div><div style="position:absolute;left:1px;top:818px;width:49px;height:22px;background:#fff;border:1px solid #dcdce0;border-bottom:none;box-sizing:border-box"></div><div style="position:absolute;top:822.69px;line-height:13px;font-size:11px;color:#111;white-space:nowrap;left:-174.5px;width:400px;text-align:center;">Tételek</div><div style="position:absolute;left:50px;top:821px;width:62px;height:19px;background:#ebebee;border:1px solid #dcdce0;border-left:none;box-sizing:border-box"></div><div style="position:absolute;top:824.69px;line-height:13px;font-size:11px;color:#111;white-space:nowrap;left:-119.0px;width:400px;text-align:center;">Mellékletek</div><div style="position:absolute;left:112px;top:821px;width:75px;height:19px;background:#ebebee;border:1px solid #dcdce0;border-left:none;box-sizing:border-box"></div><div style="position:absolute;top:824.69px;line-height:13px;font-size:11px;color:#111;white-space:nowrap;left:-50.5px;width:400px;text-align:center;">Feljegyzések</div><div style="position:absolute;left:187px;top:821px;width:41px;height:19px;background:#ebebee;border:1px solid #dcdce0;border-left:none;box-sizing:border-box"></div><div style="position:absolute;top:824.69px;line-height:13px;font-size:11px;color:#111;white-space:nowrap;left:7.5px;width:400px;text-align:center;">Tagek</div><div style="position:absolute;left:228px;top:821px;width:70px;height:19px;background:#ebebee;border:1px solid #dcdce0;border-left:none;box-sizing:border-box"></div><div style="position:absolute;top:824.69px;line-height:13px;font-size:11px;color:#111;white-space:nowrap;left:63.0px;width:400px;text-align:center;">Megjegyzés</div><div style="position:absolute;left:298px;top:821px;width:55px;height:19px;background:#ebebee;border:1px solid #dcdce0;border-left:none;box-sizing:border-box"></div><div style="position:absolute;top:824.69px;line-height:13px;font-size:11px;color:#111;white-space:nowrap;left:125.5px;width:400px;text-align:center;">Projektek</div><div style="position:absolute;left:0px;top:839px;width:1910px;height:175px;background:#fff;border-left:1px solid #d0d0d0;border-bottom:1px solid #d0d0d0;box-sizing:border-box"></div><div style="position:absolute;left:50px;top:839px;width:1860px;height:1px;background:#d6d6d8"></div><div style="position:absolute;left:4px;top:843px;width:779px;height:25px;background:#eeedf2;border:1px solid #c5cbd9;box-sizing:border-box"></div><div style="position:absolute;left:187px;top:844px;width:1px;height:23px;background:#c5cbd9"></div><div style="position:absolute;left:301px;top:844px;width:1px;height:23px;background:#c5cbd9"></div><div style="position:absolute;left:376px;top:844px;width:1px;height:23px;background:#c5cbd9"></div><div style="position:absolute;left:451px;top:844px;width:1px;height:23px;background:#c5cbd9"></div><div style="position:absolute;left:557px;top:844px;width:1px;height:23px;background:#c5cbd9"></div><div style="position:absolute;left:685px;top:844px;width:1px;height:23px;background:#c5cbd9"></div><svg style="left:8px;top:847px" width="16" height="17" viewBox="0 0 16 17"><text x="1" y="6" font-family="Liberation Sans" font-size="5" font-weight="bold" fill="#888">SN</text><text x="7" y="15" font-family="Liberation Sans" font-size="5" font-weight="bold" fill="#888">LOT</text><path d="M1 16 L15 1" stroke="#f2a36e" stroke-width="1"/></svg><div style="position:absolute;top:848.69px;line-height:13px;font-size:11px;color:#111;white-space:nowrap;left:27px;letter-spacing:-0.200px;">SN/LOT kódok, sortiment elemek</div><svg style="left:209px;top:847px" width="16" height="17" viewBox="0 0 16 17"><rect x="2" y="2" width="12" height="14" fill="none" stroke="#777" stroke-width="1.4"/><rect x="5" y="0.5" width="6" height="3" fill="#777"/><path d="M4 7 H5.5 M7 7 H12 M4 10 H5.5 M7 10 H12 M4 13 H5.5 M7 13 H12" stroke="#777" stroke-width="1.2"/></svg><div style="position:absolute;top:848.69px;line-height:13px;font-size:11px;color:#111;white-space:nowrap;left:228px;letter-spacing:-0.300px;">Foglalások</div><svg style="left:322px;top:847px" width="16" height="17" viewBox="0 0 16 17"><path d="M8 1 V16 M0.5 8.5 H15.5" stroke="#777" stroke-width="1.8"/></svg><div style="position:absolute;top:848.69px;line-height:13px;font-size:11px;color:#111;white-space:nowrap;left:341.4px;letter-spacing:0.909px;">Új</div><svg style="left:385px;top:847px" width="16" height="17" viewBox="0 0 16 17"><path d="M1 16 L3 11 L12 2 L14 4 L5 13 Z" fill="#888"/><path d="M1 16 L3 11 L5 13Z" fill="#f2a36e"/></svg><div style="position:absolute;top:848.69px;line-height:13px;font-size:11px;color:#111;white-space:nowrap;left:404.2px;letter-spacing:-0.390px;">Módosít</div><svg style="left:465px;top:847px" width="16" height="17" viewBox="0 0 16 17"><path d="M1 8 L8 5 L15 8 V15 L8 17 L1 15Z" fill="#777"/><path d="M8 10 L15 8 V15 L8 17Z" fill="#bbb"/><path d="M6 1 L16 11 M16 1 L6 11" stroke="#e0203a" stroke-width="1.8"/></svg><div style="position:absolute;top:848.69px;line-height:13px;font-size:11px;color:#111;white-space:nowrap;left:484.6px;letter-spacing:-0.027px;">Tétel storno</div><svg style="left:566px;top:847px" width="16" height="17" viewBox="0 0 16 17"><path d="M1 2 H12 M1 5 H12 M1 8 H14 M1 11 H14 M1 14 H14" stroke="#666" stroke-width="1.3"/><path d="M13 1 L15 -1" stroke="#f2a36e" stroke-width="1.2"/></svg><div style="position:absolute;top:848.69px;line-height:13px;font-size:11px;color:#111;white-space:nowrap;left:585.1px;letter-spacing:-0.278px;">Szállítói rendelések</div><svg style="left:701px;top:847px" width="16" height="17" viewBox="0 0 16 17"><path d="M3 10 Q3 6 8 7 L10 12 Q6 14 3 10Z" fill="#777"/><circle cx="6" cy="11" r="2" fill="#fff"/><path d="M9 8 L15 1" stroke="#888" stroke-width="1.8"/><path d="M2 16 H10" stroke="#666" stroke-width="1"/><path d="M5 16 H7" stroke="#f2a36e" stroke-width="1.5"/></svg><div style="position:absolute;top:848.69px;line-height:13px;font-size:11px;color:#111;white-space:nowrap;left:721.3px;letter-spacing:-0.267px;">Cikktörzs</div><div style="position:absolute;left:557px;top:843px;width:128px;height:25px;border:1.5px solid #1a73c8;box-sizing:border-box"></div><div style="position:absolute;left:4px;top:873px;width:1906px;height:138px;background:#eeedf2;border:1px solid #cfcfd2;border-right:none;box-sizing:border-box"></div><div style="position:absolute;left:5px;top:996px;width:1905px;height:14px;background:#ececec"></div><div style="position:absolute;left:18px;top:887px;width:346px;height:21px;background:#efeff1;border:1px solid #d4d4d8;box-sizing:border-box"></div><div style="position:absolute;top:890.89px;line-height:13px;font-size:11px;color:#6b6b78;white-space:nowrap;left:20.7px;letter-spacing:0.021px;">A lekérdezett listában itt végezhet további keresést</div><div style="position:absolute;left:369px;top:887px;width:60px;height:22px;border:1px solid #c5c9d9;box-sizing:border-box;background:#eeedf2;"></div><div style="position:absolute;top:891.99px;line-height:13px;font-size:11px;color:#111;white-space:nowrap;left:199.0px;width:400px;text-align:center;">Keres</div><div style="position:absolute;left:433px;top:887px;width:60px;height:22px;border:1px solid #c5c9d9;box-sizing:border-box;background:#eeedf2;"></div><div style="position:absolute;top:891.99px;line-height:13px;font-size:11px;color:#111;white-space:nowrap;left:263.0px;width:400px;text-align:center;">Töröl</div><div style="position:absolute;left:5px;top:921px;width:1904px;height:20px;background:#fcfcfd"></div><div style="position:absolute;left:16px;top:921px;width:1px;height:20px;background:#d4d6e4"></div><div style="position:absolute;left:17px;top:921px;width:95px;height:20px;overflow:hidden;white-space:nowrap"><div style="position:absolute;left:3.10px;top:3.69px;line-height:13px;font-size:11px;color:#222;letter-spacing:0.300px">ID</div></div><div style="position:absolute;left:114px;top:921px;width:1px;height:20px;background:#d4d6e4"></div><div style="position:absolute;left:115px;top:921px;width:140px;height:20px;overflow:hidden;white-space:nowrap"><div style="position:absolute;left:3.50px;top:3.69px;line-height:13px;font-size:11px;color:#222;letter-spacing:-0.696px">Cikkszám</div></div><div style="position:absolute;left:257px;top:921px;width:1px;height:20px;background:#d4d6e4"></div><div style="position:absolute;left:258px;top:921px;width:233px;height:20px;overflow:hidden;white-space:nowrap"><div style="position:absolute;left:3.00px;top:3.69px;line-height:13px;font-size:11px;color:#222;letter-spacing:-0.597px">Cikk</div></div><div style="position:absolute;left:493px;top:921px;width:1px;height:20px;background:#d4d6e4"></div><div style="position:absolute;left:494px;top:921px;width:95px;height:20px;overflow:hidden;white-space:nowrap"><div style="position:absolute;left:3.20px;top:3.69px;line-height:13px;font-size:11px;color:#222;letter-spacing:-0.313px">Mennyiség</div></div><div style="position:absolute;left:591px;top:921px;width:1px;height:20px;background:#d4d6e4"></div><div style="position:absolute;left:592px;top:921px;width:94px;height:20px;overflow:hidden;white-space:nowrap"><div style="position:absolute;left:3.20px;top:3.69px;line-height:13px;font-size:11px;color:#222;letter-spacing:-0.131px">Feldolgozott menn</div></div><div style="position:absolute;left:688px;top:921px;width:1px;height:20px;background:#d4d6e4"></div><div style="position:absolute;left:689px;top:921px;width:95px;height:20px;overflow:hidden;white-space:nowrap"><div style="position:absolute;left:3.40px;top:3.69px;line-height:13px;font-size:11px;color:#222;letter-spacing:-0.092px">Stornózott mennyis</div></div><div style="position:absolute;left:786px;top:921px;width:1px;height:20px;background:#d4d6e4"></div><div style="position:absolute;left:787px;top:921px;width:95px;height:20px;overflow:hidden;white-space:nowrap"><div style="position:absolute;left:2.80px;top:3.69px;line-height:13px;font-size:11px;color:#222;letter-spacing:-0.186px">Foglalt mennyiség</div></div><div style="position:absolute;left:884px;top:921px;width:1px;height:20px;background:#d4d6e4"></div><div style="position:absolute;left:885px;top:921px;width:95px;height:20px;overflow:hidden;white-space:nowrap"><div style="position:absolute;left:3.00px;top:3.69px;line-height:13px;font-size:11px;color:#222;letter-spacing:0.004px">Nyitott mennyiség</div></div><div style="position:absolute;left:982px;top:921px;width:1px;height:20px;background:#d4d6e4"></div><div style="position:absolute;left:983px;top:921px;width:49px;height:20px;overflow:hidden;white-space:nowrap"><div style="position:absolute;left:2.90px;top:3.69px;line-height:13px;font-size:11px;color:#222;letter-spacing:-0.222px">Me.</div></div><div style="position:absolute;left:1034px;top:921px;width:1px;height:20px;background:#d4d6e4"></div><div style="position:absolute;left:1035px;top:921px;width:95px;height:20px;overflow:hidden;white-space:nowrap"><div style="position:absolute;left:3.10px;top:3.69px;line-height:13px;font-size:11px;color:#222;letter-spacing:-0.102px">N° eár</div></div><div style="position:absolute;left:1132px;top:921px;width:1px;height:20px;background:#d4d6e4"></div><div style="position:absolute;left:1133px;top:921px;width:94px;height:20px;overflow:hidden;white-space:nowrap"><div style="position:absolute;left:3.60px;top:3.69px;line-height:13px;font-size:11px;color:#222;letter-spacing:-0.243px">Áfa kulcs</div></div><div style="position:absolute;left:1229px;top:921px;width:1px;height:20px;background:#d4d6e4"></div><div style="position:absolute;left:1230px;top:921px;width:95px;height:20px;overflow:hidden;white-space:nowrap"><div style="position:absolute;left:3.00px;top:3.69px;line-height:13px;font-size:11px;color:#222;letter-spacing:-0.240px">N° össz.</div></div><div style="position:absolute;left:1327px;top:921px;width:1px;height:20px;background:#d4d6e4"></div><div style="position:absolute;left:1328px;top:921px;width:95px;height:20px;overflow:hidden;white-space:nowrap"><div style="position:absolute;left:3.50px;top:3.69px;line-height:13px;font-size:11px;color:#222;letter-spacing:-0.008px">Áfa</div></div><div style="position:absolute;left:1425px;top:921px;width:1px;height:20px;background:#d4d6e4"></div><div style="position:absolute;left:1426px;top:921px;width:95px;height:20px;overflow:hidden;white-space:nowrap"><div style="position:absolute;left:3.50px;top:3.69px;line-height:13px;font-size:11px;color:#222;letter-spacing:-0.324px">B° össz.</div></div><div style="position:absolute;left:1523px;top:921px;width:1px;height:20px;background:#d4d6e4"></div><div style="position:absolute;left:1524px;top:921px;width:186px;height:20px;overflow:hidden;white-space:nowrap"><div style="position:absolute;left:3.10px;top:3.69px;line-height:13px;font-size:11px;color:#222;letter-spacing:-0.189px">Megjegyzés</div></div><div style="position:absolute;left:1712px;top:921px;width:1px;height:20px;background:#d4d6e4"></div><div style="position:absolute;left:1713px;top:921px;width:95px;height:20px;overflow:hidden;white-space:nowrap"><div style="position:absolute;left:3.60px;top:3.69px;line-height:13px;font-size:11px;color:#222;letter-spacing:0.109px">Hivatkozott tétel II</div></div><div style="position:absolute;left:1810px;top:921px;width:1px;height:20px;background:#d4d6e4"></div><div style="position:absolute;left:1811px;top:921px;width:96px;height:20px;overflow:hidden;white-space:nowrap"><div style="position:absolute;left:3.50px;top:3.69px;line-height:13px;font-size:11px;color:#222;letter-spacing:-0.245px">Szállítói rendelt me</div></div><svg style="left:6px;top:927px" width="9" height="9" viewBox="0 0 9 9"><g stroke="#6a6a6a" stroke-width="1.25" stroke-linecap="round"><path d="M4.5 0.8 V2.9 M4.5 6.1 V8.2 M0.8 4.5 H2.9 M6.1 4.5 H8.2 M1.9 1.9 L3.1 3.1 M5.9 5.9 L7.1 7.1 M7.1 1.9 L5.9 3.1 M3.1 5.9 L1.9 7.1"/></g></svg><div style="position:absolute;left:16px;top:942px;width:1893px;height:17px;background:#0078d7"></div><div style="position:absolute;left:494px;top:942px;width:97px;height:17px;background:#006a00"></div><div style="position:absolute;left:16px;top:959px;width:1893px;height:1px;background:#e4e4e4"></div><div style="position:absolute;top:944.69px;line-height:13px;font-size:11px;color:#fff;white-space:nowrap;right:1798px;">2387</div><div style="position:absolute;top:944.69px;line-height:13px;font-size:11px;color:#fff;white-space:nowrap;left:116px;">PCT85</div><div style="position:absolute;top:944.69px;line-height:13px;font-size:11px;color:#fff;white-space:nowrap;left:259px;">TESZTCIKK FIFO</div><div style="position:absolute;top:944.69px;line-height:13px;font-size:11px;color:#000;white-space:nowrap;right:1321px;">1</div><div style="position:absolute;top:944.69px;line-height:13px;font-size:11px;color:#fff;white-space:nowrap;right:1224px;">0</div><div style="position:absolute;top:944.69px;line-height:13px;font-size:11px;color:#fff;white-space:nowrap;right:1126px;">0</div><div style="position:absolute;top:944.69px;line-height:13px;font-size:11px;color:#fff;white-space:nowrap;right:1028px;">0</div><div style="position:absolute;top:944.69px;line-height:13px;font-size:11px;color:#fff;white-space:nowrap;right:930px;">1</div><div style="position:absolute;top:944.69px;line-height:13px;font-size:11px;color:#fff;white-space:nowrap;left:984px;">db</div><div style="position:absolute;top:944.69px;line-height:13px;font-size:11px;color:#fff;white-space:nowrap;right:780px;">787,40157</div><div style="position:absolute;top:944.69px;line-height:13px;font-size:11px;color:#fff;white-space:nowrap;right:683px;">27</div><div style="position:absolute;top:944.69px;line-height:13px;font-size:11px;color:#fff;white-space:nowrap;right:585px;">787</div><div style="position:absolute;top:944.69px;line-height:13px;font-size:11px;color:#fff;white-space:nowrap;right:487px;">213</div><div style="position:absolute;top:944.69px;line-height:13px;font-size:11px;color:#fff;white-space:nowrap;right:389px;">1 000</div><div style="position:absolute;top:944.69px;line-height:13px;font-size:11px;color:#ff1a30;white-space:nowrap;left:1525px;">Tesztcikk FIFO</div><div style="position:absolute;top:944.69px;line-height:13px;font-size:11px;color:#fff;white-space:nowrap;left:1714px;"></div><div style="position:absolute;top:944.69px;line-height:13px;font-size:11px;color:#fff;white-space:nowrap;right:3px;">1</div><div style="position:absolute;left:16px;top:960px;width:1893px;height:17px;background:#007d00"></div><div style="position:absolute;left:16px;top:977px;width:1893px;height:1px;background:#e4e4e4"></div><div style="position:absolute;top:962.69px;line-height:13px;font-size:11px;color:#000;white-space:nowrap;right:1798px;">2388</div><div style="position:absolute;top:962.69px;line-height:13px;font-size:11px;color:#000;white-space:nowrap;left:116px;">PCT87</div><div style="position:absolute;top:962.69px;line-height:13px;font-size:11px;color:#000;white-space:nowrap;left:259px;">TESZTCIKK LOT</div><div style="position:absolute;top:962.69px;line-height:13px;font-size:11px;color:#000;white-space:nowrap;right:1321px;">1</div><div style="position:absolute;top:962.69px;line-height:13px;font-size:11px;color:#000;white-space:nowrap;right:1224px;">0</div><div style="position:absolute;top:962.69px;line-height:13px;font-size:11px;color:#000;white-space:nowrap;right:1126px;">0</div><div style="position:absolute;top:962.69px;line-height:13px;font-size:11px;color:#000;white-space:nowrap;right:1028px;">0</div><div style="position:absolute;top:962.69px;line-height:13px;font-size:11px;color:#000;white-space:nowrap;right:930px;">1</div><div style="position:absolute;top:962.69px;line-height:13px;font-size:11px;color:#000;white-space:nowrap;left:984px;">db</div><div style="position:absolute;top:962.69px;line-height:13px;font-size:11px;color:#000;white-space:nowrap;right:780px;">1 574,80315</div><div style="position:absolute;top:962.69px;line-height:13px;font-size:11px;color:#000;white-space:nowrap;right:683px;">27</div><div style="position:absolute;top:962.69px;line-height:13px;font-size:11px;color:#000;white-space:nowrap;right:585px;">1 575</div><div style="position:absolute;top:962.69px;line-height:13px;font-size:11px;color:#000;white-space:nowrap;right:487px;">425</div><div style="position:absolute;top:962.69px;line-height:13px;font-size:11px;color:#000;white-space:nowrap;right:389px;">2 000</div><div style="position:absolute;top:962.69px;line-height:13px;font-size:11px;color:#7cfc00;white-space:nowrap;left:1525px;">Tesztcikk LOT</div><div style="position:absolute;top:962.69px;line-height:13px;font-size:11px;color:#000;white-space:nowrap;left:1714px;"></div><div style="position:absolute;top:962.69px;line-height:13px;font-size:11px;color:#000;white-space:nowrap;right:3px;">1</div><div style="position:absolute;left:16px;top:978px;width:1893px;height:17px;background:#006a00"></div><div style="position:absolute;left:16px;top:995px;width:1893px;height:1px;background:#e4e4e4"></div><div style="position:absolute;top:980.69px;line-height:13px;font-size:11px;color:#000;white-space:nowrap;right:1798px;">2389</div><div style="position:absolute;top:980.69px;line-height:13px;font-size:11px;color:#000;white-space:nowrap;left:116px;">PCT86</div><div style="position:absolute;top:980.69px;line-height:13px;font-size:11px;color:#000;white-space:nowrap;left:259px;">TESZTCIKK SN</div><div style="position:absolute;top:980.69px;line-height:13px;font-size:11px;color:#000;white-space:nowrap;right:1321px;">1</div><div style="position:absolute;top:980.69px;line-height:13px;font-size:11px;color:#000;white-space:nowrap;right:1224px;">0</div><div style="position:absolute;top:980.69px;line-height:13px;font-size:11px;color:#000;white-space:nowrap;right:1126px;">0</div><div style="position:absolute;top:980.69px;line-height:13px;font-size:11px;color:#000;white-space:nowrap;right:1028px;">0</div><div style="position:absolute;top:980.69px;line-height:13px;font-size:11px;color:#000;white-space:nowrap;right:930px;">1</div><div style="position:absolute;top:980.69px;line-height:13px;font-size:11px;color:#000;white-space:nowrap;left:984px;">db</div><div style="position:absolute;top:980.69px;line-height:13px;font-size:11px;color:#000;white-space:nowrap;right:780px;">1 181,10236</div><div style="position:absolute;top:980.69px;line-height:13px;font-size:11px;color:#000;white-space:nowrap;right:683px;">27</div><div style="position:absolute;top:980.69px;line-height:13px;font-size:11px;color:#000;white-space:nowrap;right:585px;">1 181</div><div style="position:absolute;top:980.69px;line-height:13px;font-size:11px;color:#000;white-space:nowrap;right:487px;">319</div><div style="position:absolute;top:980.69px;line-height:13px;font-size:11px;color:#000;white-space:nowrap;right:389px;">1 500</div><div style="position:absolute;top:980.69px;line-height:13px;font-size:11px;color:#000;white-space:nowrap;left:1525px;">Tesztcikk SN</div><div style="position:absolute;top:980.69px;line-height:13px;font-size:11px;color:#000;white-space:nowrap;left:1714px;"></div><div style="position:absolute;top:980.69px;line-height:13px;font-size:11px;color:#000;white-space:nowrap;right:3px;">1</div><div style="position:absolute;left:114px;top:942px;width:1px;height:53px;background:#e4e4e4"></div><div style="position:absolute;left:257px;top:942px;width:1px;height:53px;background:#e4e4e4"></div><div style="position:absolute;left:493px;top:942px;width:1px;height:53px;background:#e4e4e4"></div><div style="position:absolute;left:591px;top:942px;width:1px;height:53px;background:#e4e4e4"></div><div style="position:absolute;left:688px;top:942px;width:1px;height:53px;background:#e4e4e4"></div><div style="position:absolute;left:786px;top:942px;width:1px;height:53px;background:#e4e4e4"></div><div style="position:absolute;left:884px;top:942px;width:1px;height:53px;background:#e4e4e4"></div><div style="position:absolute;left:982px;top:942px;width:1px;height:53px;background:#e4e4e4"></div><div style="position:absolute;left:1034px;top:942px;width:1px;height:53px;background:#e4e4e4"></div><div style="position:absolute;left:1132px;top:942px;width:1px;height:53px;background:#e4e4e4"></div><div style="position:absolute;left:1229px;top:942px;width:1px;height:53px;background:#e4e4e4"></div><div style="position:absolute;left:1327px;top:942px;width:1px;height:53px;background:#e4e4e4"></div><div style="position:absolute;left:1425px;top:942px;width:1px;height:53px;background:#e4e4e4"></div><div style="position:absolute;left:1523px;top:942px;width:1px;height:53px;background:#e4e4e4"></div><div style="position:absolute;left:1712px;top:942px;width:1px;height:53px;background:#e4e4e4"></div><div style="position:absolute;left:1810px;top:942px;width:1px;height:53px;background:#e4e4e4"></div><div style="position:absolute;left:1908px;top:942px;width:1px;height:53px;background:#e4e4e4"></div><div style="position:absolute;left:5px;top:942px;width:11px;height:53px;background:#fff"></div><div style="position:absolute;left:16px;top:921px;width:1px;height:74px;background:#d4d6e4"></div><div style="position:absolute;left:5px;top:941px;width:1904px;height:1px;background:#d4d6e4"></div><div style="position:absolute;left:5px;top:959px;width:11px;height:1px;background:#d4d6e4"></div><div style="position:absolute;left:5px;top:977px;width:11px;height:1px;background:#d4d6e4"></div><div style="position:absolute;left:5px;top:995px;width:11px;height:1px;background:#d4d6e4"></div><svg style="left:9px;top:947px" width="4" height="7" viewBox="0 0 4 7"><path d="M0 0 L4 3.5 L0 7Z" fill="#555"/></svg><div style="position:absolute;left:555px;top:211px;width:1012px;height:40px;background:#8f8f8f;border:1px solid #3a3a3a;border-bottom:none;box-sizing:border-box"></div><svg style="left:566px;top:221px" width="15" height="17" viewBox="0 0 15 17"><g fill="none" stroke="#74b340" stroke-width="1.5" stroke-linecap="round"><path d="M3.2 6.3 Q7.2 9.8 11.5 6.3"/><path d="M1.6 8.6 Q5.5 10 5.5 15.3"/><path d="M12.5 8.6 Q8.5 10 8.5 15.5"/></g><g fill="#74b340"><circle cx="5.6" cy="4.5" r="0.95"/><circle cx="8.6" cy="4.5" r="0.95"/><circle cx="1.2" cy="11.6" r="0.95"/><circle cx="2.5" cy="14.1" r="0.95"/><circle cx="13" cy="11.8" r="0.95"/><circle cx="11.5" cy="14.3" r="0.95"/></g></svg><div style="position:absolute;top:223.00px;line-height:15px;font-size:13px;color:#fafafa;white-space:nowrap;left:586px;letter-spacing:-0.015px;">Értékesítés - Vevői rendelések karbantartása - Szállítói rendelések</div><svg style="left:1501px;top:225px" width="10" height="10" viewBox="0 0 10 10"><rect x="0.5" y="0.5" width="9" height="9" fill="none" stroke="#dcdcdc" stroke-width="1"/></svg><svg style="left:1537px;top:225px" width="10" height="10" viewBox="0 0 10 10"><path d="M0 0 L10 10 M10 0 L0 10" stroke="#dcdcdc" stroke-width="1"/></svg><div style="position:absolute;left:555px;top:251px;width:1012px;height:570px;background:#e3e3e3;border:1px solid #a0a0a0;border-top:none;box-sizing:border-box"></div><div style="position:absolute;left:562px;top:251px;width:998px;height:563px;background:#eeedf2;border:1px solid #b0b0b0;border-top:none;box-sizing:border-box"></div><div style="position:absolute;left:563px;top:257px;width:5px;height:1px;background:#d8d8dc"></div><div style="position:absolute;left:628px;top:257px;width:931px;height:1px;background:#d8d8dc"></div><div style="position:absolute;top:252.19px;line-height:13px;font-size:11px;color:#111;white-space:nowrap;left:571px;letter-spacing:-0.247px;">Bizonylatok</div><div style="position:absolute;left:565px;top:266px;width:992px;height:485px;background:#ededee;border:1px solid #d4d4d8;box-sizing:border-box"></div><div style="position:absolute;left:566px;top:267px;width:990px;height:47px;background:#eeedf2"></div><div style="position:absolute;left:579px;top:280px;width:346px;height:21px;background:#efeff1;border:1px solid #d4d4d8;box-sizing:border-box"></div><div style="position:absolute;top:283.89px;line-height:13px;font-size:11px;color:#6b6b78;white-space:nowrap;left:581.7px;letter-spacing:0.021px;">A lekérdezett listában itt végezhet további keresést</div><div style="position:absolute;left:930px;top:280px;width:60px;height:22px;border:1px solid #c5c9d9;box-sizing:border-box;background:#eeedf2;"></div><div style="position:absolute;top:284.99px;line-height:13px;font-size:11px;color:#111;white-space:nowrap;left:760.0px;width:400px;text-align:center;">Keres</div><div style="position:absolute;left:994px;top:280px;width:60px;height:22px;border:1px solid #c5c9d9;box-sizing:border-box;background:#eeedf2;"></div><div style="position:absolute;top:284.99px;line-height:13px;font-size:11px;color:#111;white-space:nowrap;left:824.0px;width:400px;text-align:center;">Töröl</div><div style="position:absolute;left:566px;top:314px;width:990px;height:20px;background:#fcfcfd"></div><div style="position:absolute;left:577px;top:314px;width:1px;height:39px;background:#d4d6e4"></div><div style="position:absolute;left:578px;top:314px;width:175px;height:20px;overflow:hidden;white-space:nowrap"><div style="position:absolute;left:3.10px;top:3.69px;line-height:13px;font-size:11px;color:#222;letter-spacing:-0.293px">Bizonylatszám</div></div><div style="position:absolute;left:755px;top:314px;width:1px;height:20px;background:#d4d6e4"></div><div style="position:absolute;left:756px;top:314px;width:158px;height:20px;overflow:hidden;white-space:nowrap"><div style="position:absolute;left:3.30px;top:3.69px;line-height:13px;font-size:11px;color:#222;letter-spacing:-0.256px">Kelt</div></div><div style="position:absolute;left:916px;top:314px;width:1px;height:20px;background:#d4d6e4"></div><div style="position:absolute;left:917px;top:314px;width:89px;height:20px;overflow:hidden;white-space:nowrap"><div style="position:absolute;left:3.60px;top:3.69px;line-height:13px;font-size:11px;color:#222;letter-spacing:-0.133px">Szállítótól rendelt</div></div><div style="position:absolute;left:1008px;top:314px;width:1px;height:20px;background:#d4d6e4"></div><div style="position:absolute;left:1009px;top:314px;width:90px;height:20px;overflow:hidden;white-space:nowrap"><div style="position:absolute;left:3.00px;top:3.69px;line-height:13px;font-size:11px;color:#222;letter-spacing:-0.200px">Vevői rendelés tétel</div></div><div style="position:absolute;left:1101px;top:314px;width:1px;height:20px;background:#d4d6e4"></div><div style="position:absolute;left:1102px;top:314px;width:89px;height:20px;overflow:hidden;white-space:nowrap"><div style="position:absolute;left:3.00px;top:3.69px;line-height:13px;font-size:11px;color:#222;letter-spacing:-0.200px">Beérkezett mennyiség</div></div><div style="position:absolute;left:1193px;top:314px;width:1px;height:20px;background:#d4d6e4"></div><div style="position:absolute;left:1194px;top:314px;width:89px;height:20px;overflow:hidden;white-space:nowrap"><div style="position:absolute;left:3.00px;top:3.69px;line-height:13px;font-size:11px;color:#222;letter-spacing:-0.200px">Várható mennyiség</div></div><div style="position:absolute;left:1285px;top:314px;width:1px;height:20px;background:#d4d6e4"></div><div style="position:absolute;left:1286px;top:314px;width:46px;height:20px;overflow:hidden;white-space:nowrap"><div style="position:absolute;left:3.30px;top:3.69px;line-height:13px;font-size:11px;color:#222;letter-spacing:-1.681px">Me</div></div><div style="position:absolute;left:1334px;top:314px;width:1px;height:20px;background:#d4d6e4"></div><div style="position:absolute;left:1335px;top:314px;width:219px;height:20px;overflow:hidden;white-space:nowrap"><div style="position:absolute;left:3.80px;top:3.69px;line-height:13px;font-size:11px;color:#222;letter-spacing:-0.245px">Visszaigazolt szállítási határidő</div></div><svg style="left:567px;top:320px" width="9" height="9" viewBox="0 0 9 9"><g stroke="#6a6a6a" stroke-width="1.25" stroke-linecap="round"><path d="M4.5 0.8 V2.9 M4.5 6.1 V8.2 M0.8 4.5 H2.9 M6.1 4.5 H8.2 M1.9 1.9 L3.1 3.1 M5.9 5.9 L7.1 7.1 M7.1 1.9 L5.9 3.1 M3.1 5.9 L1.9 7.1"/></g></svg><div style="position:absolute;left:566px;top:334px;width:11px;height:19px;background:#fff"></div><div style="position:absolute;left:566px;top:334px;width:990px;height:1px;background:#d4d6e4"></div><div style="position:absolute;left:566px;top:352px;width:11px;height:1px;background:#d4d6e4"></div><svg style="left:570px;top:340px" width="4" height="7" viewBox="0 0 4 7"><path d="M0 0 L4 3.5 L0 7Z" fill="#555"/></svg><div style="position:absolute;left:578px;top:335px;width:978px;height:17px;background:#0078d7"></div><div style="position:absolute;left:578px;top:335px;width:177px;height:17px;background:#d9d9d9;border:1px dotted #222;box-sizing:border-box"></div><div style="position:absolute;left:755px;top:335px;width:1px;height:17px;background:#9fc6ea"></div><div style="position:absolute;left:916px;top:335px;width:1px;height:17px;background:#9fc6ea"></div><div style="position:absolute;left:1008px;top:335px;width:1px;height:17px;background:#9fc6ea"></div><div style="position:absolute;left:1101px;top:335px;width:1px;height:17px;background:#9fc6ea"></div><div style="position:absolute;left:1193px;top:335px;width:1px;height:17px;background:#9fc6ea"></div><div style="position:absolute;left:1285px;top:335px;width:1px;height:17px;background:#9fc6ea"></div><div style="position:absolute;left:1334px;top:335px;width:1px;height:17px;background:#9fc6ea"></div><div style="position:absolute;top:338.19px;line-height:13px;font-size:11px;color:#111;white-space:nowrap;left:579px;">SZR-21-1-000069</div><div style="position:absolute;top:338.19px;line-height:13px;font-size:11px;color:#fff;white-space:nowrap;left:757px;">2021.10.12. 22:27:43</div><div style="position:absolute;top:338.19px;line-height:13px;font-size:11px;color:#fff;white-space:nowrap;right:904px;">2</div><div style="position:absolute;top:338.19px;line-height:13px;font-size:11px;color:#fff;white-space:nowrap;right:811px;">1</div><div style="position:absolute;top:338.19px;line-height:13px;font-size:11px;color:#fff;white-space:nowrap;right:719px;">0</div><div style="position:absolute;top:338.19px;line-height:13px;font-size:11px;color:#fff;white-space:nowrap;right:627px;">1</div><div style="position:absolute;top:338.19px;line-height:13px;font-size:11px;color:#fff;white-space:nowrap;left:1287px;">db</div><div style="position:absolute;top:338.19px;line-height:13px;font-size:11px;color:#fff;white-space:nowrap;left:1336px;"></div><div style="position:absolute;left:563px;top:794px;width:996px;height:1px;background:#d8d8d8"></div><div style="position:absolute;left:563px;top:795px;width:996px;height:18px;background:#f0f0f0"></div><div style="position:absolute;top:798.19px;line-height:13px;font-size:11px;color:#111;white-space:nowrap;left:566px;">F1 - Súgó; ESC - Bezár</div><svg style="left:1549px;top:803px" width="8" height="8" viewBox="0 0 8 8"><g fill="#a4a4a4"><rect x="6" y="0" width="2" height="2"/><rect x="3" y="3" width="2" height="2"/><rect x="6" y="3" width="2" height="2"/><rect x="0" y="6" width="2" height="2"/><rect x="3" y="6" width="2" height="2"/><rect x="6" y="6" width="2" height="2"/></g></svg><div style="position:absolute;left:1469px;top:760px;width:75px;height:25px;border:1px solid #c5c9d9;box-sizing:border-box;background:#eeedf2"></div><svg style="left:1484px;top:765px" width="14" height="14" viewBox="0 0 14 14"><defs><linearGradient id="rxg" x1="0" y1="0" x2="0" y2="1"><stop offset="0" stop-color="#ff8a3a"/><stop offset="1" stop-color="#e83a14"/></linearGradient></defs><path d="M3 3 L11 11 M11 3 L3 11" stroke="#e010c8" stroke-width="4.8" stroke-linecap="square"/><path d="M3 3 L11 11 M11 3 L3 11" stroke="url(#rxg)" stroke-width="3.0" stroke-linecap="square"/></svg><div style="position:absolute;top:766.02px;line-height:13px;font-size:11.5px;color:#111;white-space:nowrap;left:1502px;">Bezár</div>
</body></html>
